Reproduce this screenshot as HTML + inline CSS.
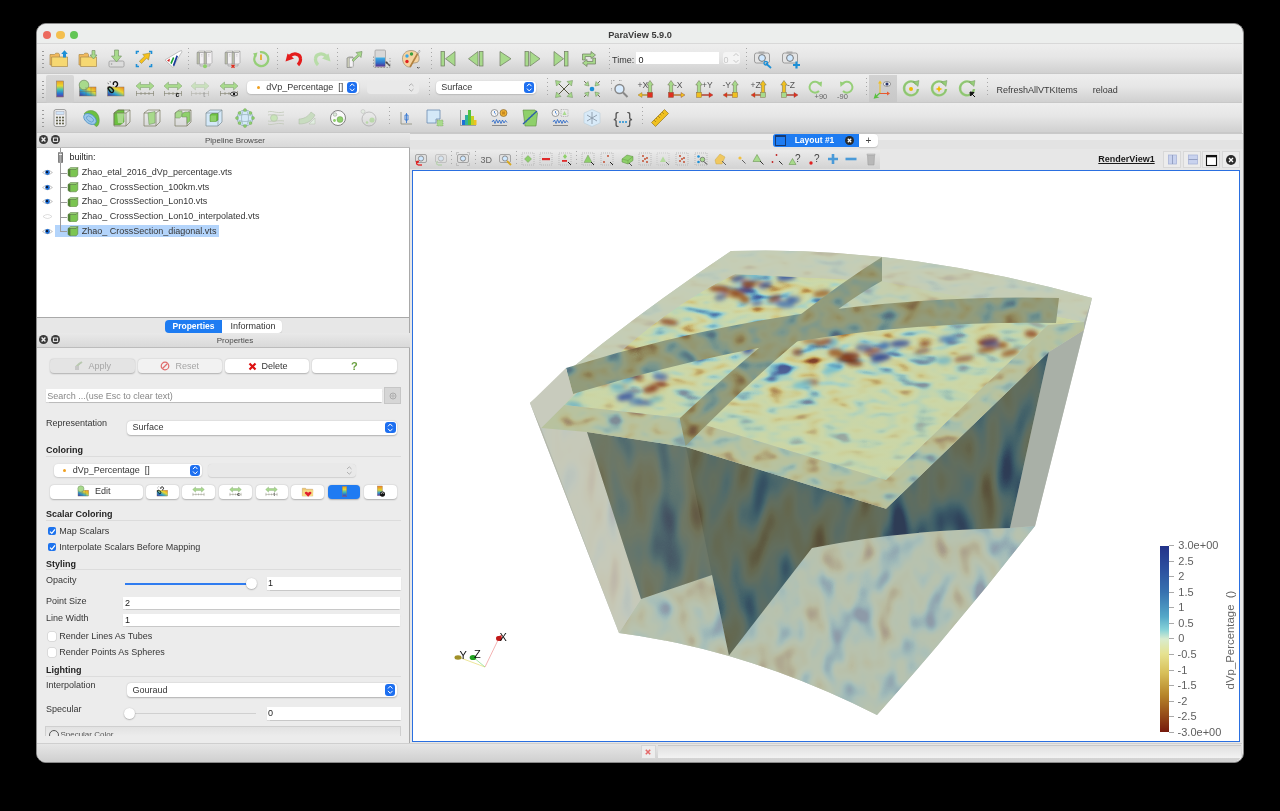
<!DOCTYPE html><html><head><meta charset="utf-8"><style>
html,body{margin:0;padding:0;background:#000;width:1280px;height:811px;overflow:hidden;}
body{font-family:"Liberation Sans", sans-serif;position:relative;-webkit-font-smoothing:antialiased;}
#root{position:absolute;left:0;top:0;width:1280px;height:811px;will-change:transform;}
div,svg{box-sizing:border-box;}
</style></head><body><div id="root">
<div style="position:absolute;left:36px;top:23px;width:1208px;height:740px;background:#ececec;border-radius:10px;border:1px solid #8a8a8a;overflow:hidden;"></div>
<div style="position:absolute;left:37px;top:24px;width:1205px;height:20px;background:#eceeed;border-radius:9px 9px 0 0;"></div>
<div style="position:absolute;left:37px;top:43px;width:1205px;height:1px;background:#d8d8d8;"></div>
<div style="position:absolute;left:42.8px;top:30.8px;width:8.4px;height:8.4px;border-radius:50%;background:#ec6a5e;"></div>
<div style="position:absolute;left:56.3px;top:30.8px;width:8.4px;height:8.4px;border-radius:50%;background:#f4bf4f;"></div>
<div style="position:absolute;left:69.8px;top:30.8px;width:8.4px;height:8.4px;border-radius:50%;background:#61c554;"></div>
<div style="position:absolute;left:440px;top:29.9px;width:400px;text-align:center;font-size:9.2px;line-height:11.2px;color:#3c3c3c;font-weight:bold;white-space:nowrap;">ParaView 5.9.0</div>
<div style="position:absolute;left:37px;top:44px;width:1205px;height:30px;background:linear-gradient(#eeeeee 0%,#e6e6e6 45%,#d0d0d0 100%);border-bottom:1px solid #c8c8c8;"></div>
<div style="position:absolute;left:42px;top:51px;width:2px;height:1px;background:#9a9a9a;"></div>
<div style="position:absolute;left:42px;top:55px;width:2px;height:1px;background:#9a9a9a;"></div>
<div style="position:absolute;left:42px;top:59px;width:2px;height:1px;background:#9a9a9a;"></div>
<div style="position:absolute;left:42px;top:63px;width:2px;height:1px;background:#9a9a9a;"></div>
<div style="position:absolute;left:42px;top:67px;width:2px;height:1px;background:#9a9a9a;"></div>
<div style="position:absolute;left:37px;top:74px;width:1205px;height:29px;background:linear-gradient(#eeeeee 0%,#e6e6e6 45%,#d0d0d0 100%);border-bottom:1px solid #c8c8c8;"></div>
<div style="position:absolute;left:42px;top:81px;width:2px;height:1px;background:#9a9a9a;"></div>
<div style="position:absolute;left:42px;top:85px;width:2px;height:1px;background:#9a9a9a;"></div>
<div style="position:absolute;left:42px;top:89px;width:2px;height:1px;background:#9a9a9a;"></div>
<div style="position:absolute;left:42px;top:93px;width:2px;height:1px;background:#9a9a9a;"></div>
<div style="position:absolute;left:42px;top:97px;width:2px;height:1px;background:#9a9a9a;"></div>
<div style="position:absolute;left:37px;top:103px;width:1205px;height:30px;background:linear-gradient(#eeeeee 0%,#e6e6e6 45%,#d0d0d0 100%);border-bottom:1px solid #c8c8c8;"></div>
<div style="position:absolute;left:42px;top:110px;width:2px;height:1px;background:#9a9a9a;"></div>
<div style="position:absolute;left:42px;top:114px;width:2px;height:1px;background:#9a9a9a;"></div>
<div style="position:absolute;left:42px;top:118px;width:2px;height:1px;background:#9a9a9a;"></div>
<div style="position:absolute;left:42px;top:122px;width:2px;height:1px;background:#9a9a9a;"></div>
<div style="position:absolute;left:42px;top:126px;width:2px;height:1px;background:#9a9a9a;"></div>
<div style="position:absolute;left:37px;top:133px;width:373px;height:15px;background:linear-gradient(#e9e9e9,#d9d9d9);border-bottom:1px solid #bcbcbc;"></div>
<div style="position:absolute;left:38.9px;top:135.20000000000002px;width:9.2px;height:9.2px;border-radius:50%;background:#3a3a3a;"></div>
<div style="position:absolute;left:50.9px;top:135.20000000000002px;width:9.2px;height:9.2px;border-radius:50%;background:#3a3a3a;"></div>
<svg style="position:absolute;left:39px;top:135.2px;" width="9" height="9" viewBox="0 0 9 9"><path d="M2.6 2.6L6.4 6.4M6.4 2.6L2.6 6.4" stroke="#eee" stroke-width="1.4"/></svg>
<svg style="position:absolute;left:51px;top:135.2px;" width="9" height="9" viewBox="0 0 9 9"><rect x="2.4" y="3" width="4.2" height="3.4" fill="none" stroke="#eee" stroke-width="1"/></svg>
<div style="position:absolute;left:35px;top:135.5px;width:400px;text-align:center;font-size:8px;line-height:10px;color:#4a4a4a;font-weight:normal;white-space:nowrap;">Pipeline Browser</div>
<div style="position:absolute;left:37px;top:148px;width:373px;height:170px;background:#fff;border-right:1px solid #a9a9a9;border-bottom:1px solid #a9a9a9;"></div>
<div style="position:absolute;left:55px;top:225px;width:164px;height:12px;background:#b3d4fb;"></div>
<div style="position:absolute;left:60px;top:148px;width:1px;height:84px;background:#9a9a9a;"></div>
<div style="position:absolute;left:57.5px;top:152px;width:5px;height:11px;background:linear-gradient(90deg,#777,#aaa,#666);border-radius:1px;"></div>
<div style="position:absolute;left:58.5px;top:154px;width:3px;height:1px;background:#eee;"></div>
<div style="position:absolute;left:69.5px;top:152.2px;font-size:9px;line-height:11px;color:#222;font-weight:normal;white-space:nowrap;">builtin:</div>
<div style="position:absolute;left:61px;top:172.5px;width:6px;height:1px;background:#9a9a9a;"></div>
<svg style="position:absolute;left:67px;top:167.3px;" width="11.5" height="10.5" viewBox="0 0 11.5 10.5"><path d="M1 2.5L3.5 0.6H10.8L9.2 2.5Z" fill="#9ad07a" stroke="#55703f" stroke-width="0.5"/><path d="M1 2.5H3.2V9.8L1 8.6Z" fill="#4e8a30" stroke="#55703f" stroke-width="0.5"/><path d="M3.2 2.5H9.2L10.8 0.6V8L9.2 9.8H3.2Z" fill="#7cc552" stroke="#55703f" stroke-width="0.5"/></svg>
<svg style="position:absolute;left:42px;top:169.0px;" width="11" height="7" viewBox="0 0 11 7"><path d="M0.6 3.5Q5.5 -1 10.4 3.5Q5.5 8 0.6 3.5Z" fill="#fff" stroke="#9a9a9a" stroke-width="0.6"/><circle cx="5.5" cy="3.5" r="2.4" fill="#1c6fd8"/><circle cx="5" cy="3.1" r="1.1" fill="#0a0a14"/></svg>
<div style="position:absolute;left:81.8px;top:167.0px;font-size:9px;line-height:11px;color:#363636;font-weight:normal;white-space:nowrap;">Zhao_etal_2016_dVp_percentage.vts</div>
<div style="position:absolute;left:61px;top:187.2px;width:6px;height:1px;background:#9a9a9a;"></div>
<svg style="position:absolute;left:67px;top:182.0px;" width="11.5" height="10.5" viewBox="0 0 11.5 10.5"><path d="M1 2.5L3.5 0.6H10.8L9.2 2.5Z" fill="#9ad07a" stroke="#55703f" stroke-width="0.5"/><path d="M1 2.5H3.2V9.8L1 8.6Z" fill="#4e8a30" stroke="#55703f" stroke-width="0.5"/><path d="M3.2 2.5H9.2L10.8 0.6V8L9.2 9.8H3.2Z" fill="#7cc552" stroke="#55703f" stroke-width="0.5"/></svg>
<svg style="position:absolute;left:42px;top:183.7px;" width="11" height="7" viewBox="0 0 11 7"><path d="M0.6 3.5Q5.5 -1 10.4 3.5Q5.5 8 0.6 3.5Z" fill="#fff" stroke="#9a9a9a" stroke-width="0.6"/><circle cx="5.5" cy="3.5" r="2.4" fill="#1c6fd8"/><circle cx="5" cy="3.1" r="1.1" fill="#0a0a14"/></svg>
<div style="position:absolute;left:81.8px;top:181.7px;font-size:9px;line-height:11px;color:#363636;font-weight:normal;white-space:nowrap;">Zhao_ CrossSection_100km.vts</div>
<div style="position:absolute;left:61px;top:201.9px;width:6px;height:1px;background:#9a9a9a;"></div>
<svg style="position:absolute;left:67px;top:196.70000000000002px;" width="11.5" height="10.5" viewBox="0 0 11.5 10.5"><path d="M1 2.5L3.5 0.6H10.8L9.2 2.5Z" fill="#9ad07a" stroke="#55703f" stroke-width="0.5"/><path d="M1 2.5H3.2V9.8L1 8.6Z" fill="#4e8a30" stroke="#55703f" stroke-width="0.5"/><path d="M3.2 2.5H9.2L10.8 0.6V8L9.2 9.8H3.2Z" fill="#7cc552" stroke="#55703f" stroke-width="0.5"/></svg>
<svg style="position:absolute;left:42px;top:198.4px;" width="11" height="7" viewBox="0 0 11 7"><path d="M0.6 3.5Q5.5 -1 10.4 3.5Q5.5 8 0.6 3.5Z" fill="#fff" stroke="#9a9a9a" stroke-width="0.6"/><circle cx="5.5" cy="3.5" r="2.4" fill="#1c6fd8"/><circle cx="5" cy="3.1" r="1.1" fill="#0a0a14"/></svg>
<div style="position:absolute;left:81.8px;top:196.4px;font-size:9px;line-height:11px;color:#363636;font-weight:normal;white-space:nowrap;">Zhao_ CrossSection_Lon10.vts</div>
<div style="position:absolute;left:61px;top:216.7px;width:6px;height:1px;background:#9a9a9a;"></div>
<svg style="position:absolute;left:67px;top:211.5px;" width="11.5" height="10.5" viewBox="0 0 11.5 10.5"><path d="M1 2.5L3.5 0.6H10.8L9.2 2.5Z" fill="#9ad07a" stroke="#55703f" stroke-width="0.5"/><path d="M1 2.5H3.2V9.8L1 8.6Z" fill="#4e8a30" stroke="#55703f" stroke-width="0.5"/><path d="M3.2 2.5H9.2L10.8 0.6V8L9.2 9.8H3.2Z" fill="#7cc552" stroke="#55703f" stroke-width="0.5"/></svg>
<svg style="position:absolute;left:42px;top:213.2px;" width="11" height="7" viewBox="0 0 11 7"><path d="M1 3.5Q5.5 -0.5 10 3.5Q5.5 7.5 1 3.5Z" fill="#fff" stroke="#c8c8c8" stroke-width="0.6"/></svg>
<div style="position:absolute;left:81.8px;top:211.2px;font-size:9px;line-height:11px;color:#363636;font-weight:normal;white-space:nowrap;">Zhao_ CrossSection_Lon10_interpolated.vts</div>
<div style="position:absolute;left:61px;top:231.2px;width:6px;height:1px;background:#9a9a9a;"></div>
<svg style="position:absolute;left:67px;top:226.0px;" width="11.5" height="10.5" viewBox="0 0 11.5 10.5"><path d="M1 2.5L3.5 0.6H10.8L9.2 2.5Z" fill="#9ad07a" stroke="#55703f" stroke-width="0.5"/><path d="M1 2.5H3.2V9.8L1 8.6Z" fill="#4e8a30" stroke="#55703f" stroke-width="0.5"/><path d="M3.2 2.5H9.2L10.8 0.6V8L9.2 9.8H3.2Z" fill="#7cc552" stroke="#55703f" stroke-width="0.5"/></svg>
<svg style="position:absolute;left:42px;top:227.7px;" width="11" height="7" viewBox="0 0 11 7"><path d="M0.6 3.5Q5.5 -1 10.4 3.5Q5.5 8 0.6 3.5Z" fill="#fff" stroke="#9a9a9a" stroke-width="0.6"/><circle cx="5.5" cy="3.5" r="2.4" fill="#1c6fd8"/><circle cx="5" cy="3.1" r="1.1" fill="#0a0a14"/></svg>
<div style="position:absolute;left:81.8px;top:225.7px;font-size:9px;line-height:11px;color:#363636;font-weight:normal;white-space:nowrap;">Zhao_ CrossSection_diagonal.vts</div>
<div style="position:absolute;left:37px;top:318px;width:373px;height:15px;background:#e7e7e7;border-right:1px solid #a9a9a9;"></div>
<div style="position:absolute;left:165px;top:320px;width:57px;height:13px;background:#1e7cf2;border-radius:4px 0 0 4px;"></div>
<div style="position:absolute;left:-6.5px;top:321.35px;width:400px;text-align:center;font-size:8.5px;line-height:10.5px;color:#fff;font-weight:bold;white-space:nowrap;">Properties</div>
<div style="position:absolute;left:222px;top:320px;width:60px;height:13px;background:#fff;border-radius:0 4px 4px 0;box-shadow:0 0.5px 1px rgba(0,0,0,0.15);"></div>
<div style="position:absolute;left:53px;top:321.1px;width:400px;text-align:center;font-size:9px;line-height:11px;color:#333;font-weight:normal;white-space:nowrap;">Information</div>
<div style="position:absolute;left:37px;top:333px;width:373px;height:15px;background:linear-gradient(#e9e9e9,#d9d9d9);border-bottom:1px solid #bcbcbc;"></div>
<div style="position:absolute;left:38.9px;top:335.2px;width:9.2px;height:9.2px;border-radius:50%;background:#3a3a3a;"></div>
<div style="position:absolute;left:50.9px;top:335.2px;width:9.2px;height:9.2px;border-radius:50%;background:#3a3a3a;"></div>
<svg style="position:absolute;left:39px;top:335.2px;" width="9" height="9" viewBox="0 0 9 9"><path d="M2.6 2.6L6.4 6.4M6.4 2.6L2.6 6.4" stroke="#eee" stroke-width="1.4"/></svg>
<svg style="position:absolute;left:51px;top:335.2px;" width="9" height="9" viewBox="0 0 9 9"><rect x="2.4" y="3" width="4.2" height="3.4" fill="none" stroke="#eee" stroke-width="1"/></svg>
<div style="position:absolute;left:35px;top:335.5px;width:400px;text-align:center;font-size:8px;line-height:10px;color:#4a4a4a;font-weight:normal;white-space:nowrap;">Properties</div>
<div style="position:absolute;left:37px;top:348px;width:373px;height:395px;background:#ececec;border-right:1px solid #a9a9a9;"></div>
<div style="position:absolute;left:50px;top:359px;width:85px;height:14px;background:#e4e4e4;border-radius:4px;box-shadow:0 0.5px 1.5px rgba(0,0,0,0.25);"></div>
<div style="position:absolute;left:137.6px;top:359px;width:84.70000000000002px;height:14px;background:#f2f2f2;border-radius:4px;box-shadow:0 0.5px 1.5px rgba(0,0,0,0.25);"></div>
<div style="position:absolute;left:225.4px;top:359px;width:83.9px;height:14px;background:#fff;border-radius:4px;box-shadow:0 0.5px 1.5px rgba(0,0,0,0.25);"></div>
<div style="position:absolute;left:311.8px;top:359px;width:85.0px;height:14px;background:#fff;border-radius:4px;box-shadow:0 0.5px 1.5px rgba(0,0,0,0.25);"></div>
<div style="position:absolute;left:88.5px;top:360.5px;font-size:9px;line-height:11px;color:#a6a6a6;font-weight:normal;white-space:nowrap;">Apply</div>
<div style="position:absolute;left:175.5px;top:360.5px;font-size:9px;line-height:11px;color:#a6a6a6;font-weight:normal;white-space:nowrap;">Reset</div>
<div style="position:absolute;left:261.5px;top:360.5px;font-size:9px;line-height:11px;color:#363636;font-weight:normal;white-space:nowrap;">Delete</div>
<svg style="position:absolute;left:74px;top:361px;" width="10" height="10" viewBox="0 0 10 10"><path d="M2 6L5 3L8 1" stroke="#b9c9b0" stroke-width="2"/><rect x="1" y="5" width="4" height="4" fill="#c7c7c7"/></svg>
<svg style="position:absolute;left:160px;top:361px;" width="10" height="10" viewBox="0 0 10 10"><circle cx="5" cy="5" r="3.8" fill="none" stroke="#e06a6a" stroke-width="1.2"/><path d="M2.5 7.5L7.5 2.5" stroke="#e06a6a" stroke-width="1.2"/></svg>
<svg style="position:absolute;left:248px;top:361.5px;" width="9" height="9" viewBox="0 0 9 9"><path d="M1.5 1.5L7.5 7.5M7.5 1.5L1.5 7.5" stroke="#d11" stroke-width="2.2"/></svg>
<div style="position:absolute;left:154.3px;top:359.5px;width:400px;text-align:center;font-size:11px;line-height:13px;color:#6aa040;font-weight:bold;white-space:nowrap;">?</div>
<div style="position:absolute;left:46px;top:389px;width:336px;height:13px;background:#fff;box-shadow:0 0.5px 1px rgba(0,0,0,0.2);"></div>
<div style="position:absolute;left:47.2px;top:390.5px;font-size:9px;line-height:11px;color:#888;font-weight:normal;white-space:nowrap;">Search ...(use Esc to clear text)</div>
<div style="position:absolute;left:384.3px;top:387.3px;width:17px;height:17px;background:#d6d6d6;border:1px solid #c6c6c6;"></div>
<svg style="position:absolute;left:387.8px;top:390.8px;" width="10" height="10" viewBox="0 0 10 10"><circle cx="5" cy="5" r="3" fill="none" stroke="#aaa" stroke-width="1"/><circle cx="5" cy="5" r="1.2" fill="none" stroke="#aaa" stroke-width="0.8"/></svg>
<div style="position:absolute;left:46px;top:418px;font-size:9px;line-height:11px;color:#363636;font-weight:normal;white-space:nowrap;">Representation</div>
<div style="position:absolute;left:126.6px;top:420.6px;width:270.4px;height:14.099999999999966px;background:#fff;border-radius:4px;box-shadow:0 0.5px 1.5px rgba(0,0,0,0.25);"></div>
<div style="position:absolute;left:132.6px;top:422.15px;font-size:9px;line-height:11px;color:#363636;font-weight:normal;white-space:nowrap;">Surface</div>
<div style="position:absolute;left:385px;top:422.1px;width:10.5px;height:11.099999999999966px;background:#1d6ff0;border-radius:3px;"></div>
<svg style="position:absolute;left:385px;top:422.1px;" width="11" height="11.099999999999966" viewBox="0 0 11 11.099999999999966"><path d="M3 4.349999999999983L5.25 1.9499999999999829L7.5 4.349999999999983M3 6.749999999999983L5.25 9.149999999999983L7.5 6.749999999999983" fill="none" stroke="#fff" stroke-width="1"/></svg>
<div style="position:absolute;left:46px;top:445px;font-size:9px;line-height:11px;color:#1f1f1f;font-weight:bold;white-space:nowrap;">Coloring</div>
<div style="position:absolute;left:46px;top:455.5px;width:355px;height:1px;background:#dcdcdc;"></div>
<div style="position:absolute;left:53.5px;top:463.6px;width:148.1px;height:13.599999999999966px;background:#fff;border-radius:4px;box-shadow:0 0.5px 1.5px rgba(0,0,0,0.25);"></div>
<div style="position:absolute;left:72.7px;top:464.9px;font-size:9px;line-height:11px;color:#363636;font-weight:normal;white-space:nowrap;">dVp_Percentage&nbsp;&nbsp;[]</div>
<div style="position:absolute;left:63.300000000000004px;top:468.79999999999995px;width:3.2px;height:3.2px;border-radius:50%;background:#f0a020;"></div>
<div style="position:absolute;left:189.6px;top:465.1px;width:10.5px;height:10.599999999999966px;background:#1d6ff0;border-radius:3px;"></div>
<svg style="position:absolute;left:189.6px;top:465.1px;" width="11" height="10.599999999999966" viewBox="0 0 11 10.599999999999966"><path d="M3 4.099999999999983L5.25 1.6999999999999829L7.5 4.099999999999983M3 6.499999999999983L5.25 8.899999999999983L7.5 6.499999999999983" fill="none" stroke="#fff" stroke-width="1"/></svg>
<div style="position:absolute;left:208.2px;top:463.6px;width:148px;height:13.6px;background:#e9e9e9;border-radius:4px;box-shadow:0 0.5px 1px rgba(0,0,0,0.12);"></div>
<svg style="position:absolute;left:344px;top:465px;" width="11" height="11" viewBox="0 0 11 11"><path d="M3 4L5.25 1.8L7.5 4M3 7L5.25 9.2L7.5 7" fill="none" stroke="#aaa" stroke-width="0.9"/></svg>
<div style="position:absolute;left:49.8px;top:484.7px;width:92.89999999999999px;height:14.0px;background:#fff;border-radius:4px;box-shadow:0 0.5px 1.5px rgba(0,0,0,0.25);"></div>
<div style="position:absolute;left:146.4px;top:484.7px;width:32.29999999999998px;height:14.0px;background:#fff;border-radius:4px;box-shadow:0 0.5px 1.5px rgba(0,0,0,0.25);"></div>
<div style="position:absolute;left:182.3px;top:484.7px;width:32.69999999999999px;height:14.0px;background:#fff;border-radius:4px;box-shadow:0 0.5px 1.5px rgba(0,0,0,0.25);"></div>
<div style="position:absolute;left:219px;top:484.7px;width:32.5px;height:14.0px;background:#fff;border-radius:4px;box-shadow:0 0.5px 1.5px rgba(0,0,0,0.25);"></div>
<div style="position:absolute;left:255.5px;top:484.7px;width:32.5px;height:14.0px;background:#fff;border-radius:4px;box-shadow:0 0.5px 1.5px rgba(0,0,0,0.25);"></div>
<div style="position:absolute;left:291.4px;top:484.7px;width:32.60000000000002px;height:14.0px;background:#fff;border-radius:4px;box-shadow:0 0.5px 1.5px rgba(0,0,0,0.25);"></div>
<div style="position:absolute;left:328px;top:484.7px;width:32px;height:14.0px;background:#1f7bf2;border-radius:4px;box-shadow:0 0.5px 1.5px rgba(0,0,0,0.25);"></div>
<div style="position:absolute;left:364.2px;top:484.7px;width:33.0px;height:14.0px;background:#fff;border-radius:4px;box-shadow:0 0.5px 1.5px rgba(0,0,0,0.25);"></div>
<div style="position:absolute;left:95px;top:486.3px;font-size:9px;line-height:11px;color:#363636;font-weight:normal;white-space:nowrap;">Edit</div>
<div style="position:absolute;left:46px;top:508.5px;font-size:9px;line-height:11px;color:#1f1f1f;font-weight:bold;white-space:nowrap;">Scalar Coloring</div>
<div style="position:absolute;left:46px;top:519.5px;width:355px;height:1px;background:#dcdcdc;"></div>
<div style="position:absolute;left:47.8px;top:526.7px;width:8.6px;height:8.6px;background:#1d73ee;border-radius:2px;"></div>
<svg style="position:absolute;left:47.8px;top:526.7px;" width="9" height="9" viewBox="0 0 9 9"><path d="M2 4.6L3.8 6.4L7 2.4" fill="none" stroke="#fff" stroke-width="1.3"/></svg>
<div style="position:absolute;left:59.3px;top:525.5px;font-size:9px;line-height:11px;color:#363636;font-weight:normal;white-space:nowrap;">Map Scalars</div>
<div style="position:absolute;left:47.8px;top:542.7px;width:8.6px;height:8.6px;background:#1d73ee;border-radius:2px;"></div>
<svg style="position:absolute;left:47.8px;top:542.7px;" width="9" height="9" viewBox="0 0 9 9"><path d="M2 4.6L3.8 6.4L7 2.4" fill="none" stroke="#fff" stroke-width="1.3"/></svg>
<div style="position:absolute;left:59.3px;top:541.5px;font-size:9px;line-height:11px;color:#363636;font-weight:normal;white-space:nowrap;">Interpolate Scalars Before Mapping</div>
<div style="position:absolute;left:46px;top:559px;font-size:9px;line-height:11px;color:#1f1f1f;font-weight:bold;white-space:nowrap;">Styling</div>
<div style="position:absolute;left:46px;top:569px;width:355px;height:1px;background:#dcdcdc;"></div>
<div style="position:absolute;left:46px;top:574.5px;font-size:9px;line-height:11px;color:#363636;font-weight:normal;white-space:nowrap;">Opacity</div>
<div style="position:absolute;left:125px;top:583px;width:127px;height:1.6px;background:#2f7cf0;"></div>
<div style="position:absolute;left:245.5px;top:577.8px;width:11px;height:11px;border-radius:50%;background:#fff;box-shadow:0 0.5px 1.5px rgba(0,0,0,0.4);"></div>
<div style="position:absolute;left:266.7px;top:577px;width:134px;height:13.3px;background:#fff;box-shadow:0 0.5px 1px rgba(0,0,0,0.15);"></div>
<div style="position:absolute;left:268px;top:578.3px;font-size:9px;line-height:11px;color:#222;font-weight:normal;white-space:nowrap;">1</div>
<div style="position:absolute;left:46px;top:595.5px;font-size:9px;line-height:11px;color:#363636;font-weight:normal;white-space:nowrap;">Point Size</div>
<div style="position:absolute;left:123.4px;top:597px;width:277px;height:12.4px;background:#fff;box-shadow:0 0.5px 1px rgba(0,0,0,0.15);"></div>
<div style="position:absolute;left:125px;top:597.8px;font-size:9px;line-height:11px;color:#222;font-weight:normal;white-space:nowrap;">2</div>
<div style="position:absolute;left:46px;top:612.5px;font-size:9px;line-height:11px;color:#363636;font-weight:normal;white-space:nowrap;">Line Width</div>
<div style="position:absolute;left:123.4px;top:614px;width:277px;height:12.4px;background:#fff;box-shadow:0 0.5px 1px rgba(0,0,0,0.15);"></div>
<div style="position:absolute;left:125px;top:614.8px;font-size:9px;line-height:11px;color:#222;font-weight:normal;white-space:nowrap;">1</div>
<div style="position:absolute;left:47.8px;top:632.2px;width:8.6px;height:8.6px;background:#fff;border-radius:2px;box-shadow:0 0 0 0.5px #c8c8c8;"></div>
<div style="position:absolute;left:59.3px;top:631px;font-size:9px;line-height:11px;color:#363636;font-weight:normal;white-space:nowrap;">Render Lines As Tubes</div>
<div style="position:absolute;left:47.8px;top:648.2px;width:8.6px;height:8.6px;background:#fff;border-radius:2px;box-shadow:0 0 0 0.5px #c8c8c8;"></div>
<div style="position:absolute;left:59.3px;top:647px;font-size:9px;line-height:11px;color:#363636;font-weight:normal;white-space:nowrap;">Render Points As Spheres</div>
<div style="position:absolute;left:46px;top:664.5px;font-size:9px;line-height:11px;color:#1f1f1f;font-weight:bold;white-space:nowrap;">Lighting</div>
<div style="position:absolute;left:46px;top:675.5px;width:355px;height:1px;background:#dcdcdc;"></div>
<div style="position:absolute;left:46px;top:680px;font-size:9px;line-height:11px;color:#363636;font-weight:normal;white-space:nowrap;">Interpolation</div>
<div style="position:absolute;left:126.5px;top:682.8px;width:270.3px;height:14.400000000000091px;background:#fff;border-radius:4px;box-shadow:0 0.5px 1.5px rgba(0,0,0,0.25);"></div>
<div style="position:absolute;left:132.5px;top:684.5px;font-size:9px;line-height:11px;color:#363636;font-weight:normal;white-space:nowrap;">Gouraud</div>
<div style="position:absolute;left:384.8px;top:684.3px;width:10.5px;height:11.400000000000091px;background:#1d6ff0;border-radius:3px;"></div>
<svg style="position:absolute;left:384.8px;top:684.3px;" width="11" height="11.400000000000091" viewBox="0 0 11 11.400000000000091"><path d="M3 4.500000000000045L5.25 2.1000000000000454L7.5 4.500000000000045M3 6.900000000000046L5.25 9.300000000000045L7.5 6.900000000000046" fill="none" stroke="#fff" stroke-width="1"/></svg>
<div style="position:absolute;left:46px;top:704px;font-size:9px;line-height:11px;color:#363636;font-weight:normal;white-space:nowrap;">Specular</div>
<div style="position:absolute;left:125px;top:713px;width:131px;height:1.2px;background:#d0d0d0;"></div>
<div style="position:absolute;left:124px;top:708px;width:11px;height:11px;border-radius:50%;background:#fff;box-shadow:0 0.5px 1.5px rgba(0,0,0,0.4);"></div>
<div style="position:absolute;left:266.7px;top:706.5px;width:134px;height:13.3px;background:#fff;box-shadow:0 0.5px 1px rgba(0,0,0,0.15);"></div>
<div style="position:absolute;left:268px;top:707.8px;font-size:9px;line-height:11px;color:#222;font-weight:normal;white-space:nowrap;">0</div>
<div style="position:absolute;left:45.4px;top:726px;width:356px;height:10px;background:linear-gradient(#e2e2e2,#ececec);border:1px solid #cfcfcf;border-bottom:none;overflow:hidden;"></div>
<div style="position:absolute;left:45.4px;top:726px;width:356px;height:9.5px;overflow:hidden;"><div style="position:absolute;left:15px;top:4px;font-size:8px;line-height:10px;color:#555;white-space:nowrap;">Specular Color</div><div style="position:absolute;left:4px;top:3.5px;width:10px;height:10px;border-radius:50%;border:1px solid #555;box-sizing:border-box;"></div></div>
<div style="position:absolute;left:410px;top:133px;width:833px;height:16px;background:linear-gradient(#ececec 0,#ececec 6px,#e3e3e3 6px,#e3e3e3 100%);border-top:1px solid #c9c9c9;"></div>
<div style="position:absolute;left:773px;top:134px;width:85.5px;height:12.8px;background:#1e7cf2;border-radius:3px 0 0 3px;"></div>
<div style="position:absolute;left:775px;top:135px;width:11px;height:10.5px;background:#1e7cf2;border:1px solid #163a73;border-top:2px solid #163a73;"></div>
<div style="position:absolute;left:614.5px;top:135.35px;width:400px;text-align:center;font-size:8.5px;line-height:10.5px;color:#fff;font-weight:bold;white-space:nowrap;">Layout #1</div>
<div style="position:absolute;left:844.5px;top:135.8px;width:9px;height:9px;border-radius:50%;background:#2b2b2b;"></div>
<svg style="position:absolute;left:844.5px;top:135.8px;" width="9" height="9" viewBox="0 0 9 9"><path d="M2.8 2.8L6.2 6.2M6.2 2.8L2.8 6.2" stroke="#fff" stroke-width="1.3"/></svg>
<div style="position:absolute;left:858.5px;top:134px;width:19.5px;height:12.8px;background:#fff;border-radius:0 4px 4px 0;box-shadow:0 0.5px 1px rgba(0,0,0,0.15);"></div>
<div style="position:absolute;left:668.3px;top:134.5px;width:400px;text-align:center;font-size:10px;line-height:12px;color:#444;font-weight:normal;white-space:nowrap;">+</div>
<div style="position:absolute;left:410px;top:149px;width:833px;height:21px;background:#e7e7e7;"></div>
<div style="position:absolute;left:410px;top:150px;width:470px;height:19px;background:linear-gradient(#ebebeb,#d3d3d3);"></div>
<div style="position:absolute;left:1098.3px;top:154.3px;font-size:9px;line-height:11px;color:#1a1a1a;font-weight:bold;white-space:nowrap;"><u>RenderView1</u></div>
<div style="position:absolute;left:1163.4px;top:150.8px;width:17.799999999999955px;height:17.7px;background:#ececec;border:1px solid #d8d8d8;"></div>
<div style="position:absolute;left:1183px;top:150.8px;width:17.5px;height:17.7px;background:#ececec;border:1px solid #d8d8d8;"></div>
<div style="position:absolute;left:1202px;top:150.8px;width:18px;height:17.7px;background:#ececec;border:1px solid #d8d8d8;"></div>
<div style="position:absolute;left:1222px;top:150.8px;width:17.59999999999991px;height:17.7px;background:#ececec;border:1px solid #d8d8d8;"></div>
<svg style="position:absolute;left:1165px;top:153px;" width="15" height="13" viewBox="0 0 15 13"><rect x="3.5" y="2" width="8" height="9" fill="#c8d2ee" stroke="#a8b4d8" stroke-width="0.8"/><path d="M7.5 2V11" stroke="#8894b8" stroke-width="0.8"/></svg>
<svg style="position:absolute;left:1184.5px;top:153px;" width="15" height="13" viewBox="0 0 15 13"><rect x="3.5" y="2" width="9" height="9" fill="#c8d2ee" stroke="#a8b4d8" stroke-width="0.8"/><path d="M3.5 6.5H12.5" stroke="#8894b8" stroke-width="0.8"/></svg>
<svg style="position:absolute;left:1203.5px;top:152.5px;" width="15" height="15" viewBox="0 0 15 15"><rect x="2.5" y="2.5" width="10" height="10" fill="#fff" stroke="#111" stroke-width="1.1"/><rect x="2.5" y="2.5" width="10" height="1.8" fill="#111"/></svg>
<div style="position:absolute;left:1226px;top:154.5px;width:10px;height:10px;border-radius:50%;background:#2b2b2b;"></div>
<svg style="position:absolute;left:1226px;top:154.5px;" width="10" height="10" viewBox="0 0 10 10"><path d="M3 3L7 7M7 3L3 7" stroke="#fff" stroke-width="1.4"/></svg>
<div style="position:absolute;left:410px;top:169px;width:833px;height:574px;background:#e7e7e7;"></div>
<div style="position:absolute;left:412px;top:170px;width:828px;height:571.5px;background:#fff;border:1.6px solid #2a6fe0;"></div>
<div style="position:absolute;left:37px;top:743px;width:1205px;height:19px;background:linear-gradient(#e6e6e6,#cfcfcf);border-top:1px solid #cfcfcf;border-radius:0 0 9px 9px;"></div>
<div style="position:absolute;left:640.6px;top:745px;width:15px;height:14px;background:#ededed;border:1px solid #d6d6d6;"></div>
<svg style="position:absolute;left:643px;top:747px;" width="10" height="10" viewBox="0 0 10 10"><path d="M2.8 2.8L7.2 7.2M7.2 2.8L2.8 7.2" stroke="#e46a6a" stroke-width="1.6"/></svg>
<div style="position:absolute;left:657.8px;top:745px;width:583px;height:13px;background:linear-gradient(#e0e0e0,#f2f2f2);border-top:1px solid #c9c9c9;"></div>
<svg style="position:absolute;left:0px;top:0px;clip-path:inset(171.6px 41.6px 71.1px 413.6px);" width="1280" height="811" viewBox="0 0 1280 811"><defs><filter id="tTop" filterUnits="userSpaceOnUse" x="500" y="240" width="620" height="490" color-interpolation-filters="sRGB"><feTurbulence type="fractalNoise" baseFrequency="0.034 0.085" numOctaves="2" seed="3" result="n"/><feColorMatrix in="n" type="matrix" values="1 0 0 0 0  1 0 0 0 0  1 0 0 0 0  0 0 0 0 1" result="g"/><feComponentTransfer in="g"><feFuncR type="table" tableValues="0.460 0.460 0.460 0.460 0.460 0.460 0.537 0.608 0.665 0.717 0.758 0.792 0.823 0.823 0.818 0.814 0.810 0.808 0.806 0.805 0.793 0.772 0.742 0.704 0.659 0.606 0.537 0.460 0.380 0.326 0.267 0.229 0.199 0.193 0.193 0.193 0.193 0.193 0.193 0.193 0.193"/><feFuncG type="table" tableValues="0.166 0.166 0.166 0.166 0.166 0.166 0.263 0.354 0.451 0.541 0.622 0.696 0.762 0.790 0.808 0.824 0.836 0.845 0.851 0.852 0.849 0.846 0.840 0.834 0.825 0.816 0.773 0.724 0.666 0.578 0.483 0.387 0.288 0.267 0.267 0.267 0.267 0.267 0.267 0.267 0.267"/><feFuncB type="table" tableValues="0.088 0.088 0.088 0.088 0.088 0.088 0.127 0.165 0.218 0.267 0.335 0.409 0.475 0.525 0.567 0.602 0.630 0.651 0.663 0.667 0.675 0.691 0.714 0.742 0.776 0.816 0.812 0.805 0.794 0.755 0.714 0.655 0.586 0.572 0.572 0.572 0.572 0.572 0.572 0.572 0.572"/><feFuncA type="linear" slope="0" intercept="1"/></feComponentTransfer></filter><filter id="tShellTop" filterUnits="userSpaceOnUse" x="500" y="240" width="620" height="490" color-interpolation-filters="sRGB"><feTurbulence type="fractalNoise" baseFrequency="0.034 0.085" numOctaves="2" seed="3" result="n"/><feColorMatrix in="n" type="matrix" values="1 0 0 0 0  1 0 0 0 0  1 0 0 0 0  0 0 0 0 1" result="g"/><feComponentTransfer in="g"><feFuncR type="table" tableValues="0.728 0.728 0.728 0.728 0.728 0.728 0.728 0.728 0.728 0.740 0.750 0.759 0.766 0.771 0.776 0.775 0.775 0.774 0.774 0.773 0.773 0.772 0.770 0.766 0.761 0.754 0.746 0.735 0.723 0.713 0.704 0.698 0.693 0.693 0.693 0.693 0.693 0.693 0.693 0.693 0.693"/><feFuncG type="table" tableValues="0.717 0.717 0.717 0.717 0.717 0.717 0.717 0.717 0.717 0.732 0.747 0.761 0.774 0.785 0.795 0.799 0.802 0.804 0.805 0.806 0.807 0.806 0.806 0.805 0.804 0.803 0.801 0.794 0.787 0.775 0.761 0.746 0.730 0.730 0.730 0.730 0.730 0.730 0.730 0.730 0.730"/><feFuncB type="table" tableValues="0.639 0.639 0.639 0.639 0.639 0.639 0.639 0.639 0.639 0.645 0.651 0.659 0.668 0.680 0.690 0.697 0.703 0.708 0.711 0.713 0.714 0.715 0.717 0.719 0.723 0.728 0.734 0.733 0.732 0.728 0.721 0.713 0.702 0.702 0.702 0.702 0.702 0.702 0.702 0.702 0.702"/><feFuncA type="linear" slope="0" intercept="1"/></feComponentTransfer></filter><filter id="tBand" filterUnits="userSpaceOnUse" x="500" y="240" width="620" height="490" color-interpolation-filters="sRGB"><feTurbulence type="fractalNoise" baseFrequency="0.04 0.06" numOctaves="2" seed="11" result="n"/><feColorMatrix in="n" type="matrix" values="1 0 0 0 0  1 0 0 0 0  1 0 0 0 0  0 0 0 0 1" result="g"/><feComponentTransfer in="g"><feFuncR type="table" tableValues="0.595 0.595 0.595 0.595 0.595 0.595 0.595 0.612 0.640 0.663 0.683 0.700 0.714 0.726 0.731 0.729 0.727 0.726 0.725 0.724 0.724 0.721 0.714 0.705 0.692 0.676 0.657 0.634 0.607 0.576 0.553 0.532 0.514 0.503 0.496 0.496 0.496 0.496 0.496 0.496 0.496"/><feFuncG type="table" tableValues="0.509 0.509 0.509 0.509 0.509 0.509 0.509 0.531 0.566 0.601 0.635 0.667 0.696 0.721 0.738 0.745 0.752 0.757 0.760 0.763 0.764 0.764 0.762 0.761 0.758 0.756 0.752 0.742 0.724 0.705 0.676 0.641 0.605 0.569 0.547 0.547 0.547 0.547 0.547 0.547 0.547"/><feFuncB type="table" tableValues="0.409 0.409 0.409 0.409 0.409 0.409 0.409 0.418 0.432 0.450 0.469 0.490 0.518 0.544 0.565 0.581 0.596 0.607 0.616 0.622 0.624 0.626 0.631 0.638 0.648 0.660 0.674 0.679 0.677 0.674 0.663 0.648 0.630 0.605 0.589 0.589 0.589 0.589 0.589 0.589 0.589"/><feFuncA type="linear" slope="0" intercept="1"/></feComponentTransfer></filter><filter id="tWall" filterUnits="userSpaceOnUse" x="500" y="240" width="620" height="490" color-interpolation-filters="sRGB"><feTurbulence type="fractalNoise" baseFrequency="0.04 0.05" numOctaves="2" seed="5" result="n"/><feColorMatrix in="n" type="matrix" values="1 0 0 0 0  1 0 0 0 0  1 0 0 0 0  0 0 0 0 1" result="g"/><feComponentTransfer in="g"><feFuncR type="table" tableValues="0.423 0.423 0.423 0.423 0.423 0.428 0.453 0.478 0.499 0.518 0.536 0.552 0.564 0.576 0.585 0.583 0.581 0.579 0.578 0.576 0.576 0.570 0.559 0.546 0.529 0.511 0.491 0.466 0.438 0.408 0.383 0.364 0.344 0.327 0.317 0.307 0.305 0.305 0.305 0.305 0.305"/><feFuncG type="table" tableValues="0.309 0.309 0.309 0.309 0.309 0.316 0.348 0.379 0.411 0.444 0.475 0.505 0.532 0.558 0.579 0.587 0.594 0.601 0.606 0.610 0.613 0.612 0.610 0.607 0.604 0.601 0.597 0.583 0.566 0.547 0.523 0.492 0.459 0.426 0.394 0.361 0.354 0.354 0.354 0.354 0.354"/><feFuncB type="table" tableValues="0.232 0.232 0.232 0.232 0.232 0.234 0.247 0.259 0.276 0.294 0.311 0.334 0.362 0.388 0.411 0.429 0.446 0.460 0.472 0.482 0.487 0.491 0.499 0.510 0.522 0.536 0.551 0.552 0.550 0.547 0.540 0.527 0.513 0.496 0.473 0.450 0.445 0.445 0.445 0.445 0.445"/><feFuncA type="linear" slope="0" intercept="1"/></feComponentTransfer></filter><filter id="tDark" filterUnits="userSpaceOnUse" x="500" y="240" width="620" height="490" color-interpolation-filters="sRGB"><feTurbulence type="fractalNoise" baseFrequency="0.035 0.014" numOctaves="2" seed="8" result="n"/><feColorMatrix in="n" type="matrix" values="1 0 0 0 0  1 0 0 0 0  1 0 0 0 0  0 0 0 0 1" result="g"/><feComponentTransfer in="g"><feFuncR type="table" tableValues="0.271 0.271 0.271 0.271 0.278 0.296 0.313 0.328 0.342 0.356 0.367 0.377 0.386 0.394 0.392 0.390 0.389 0.388 0.387 0.379 0.367 0.353 0.338 0.321 0.301 0.280 0.257 0.239 0.225 0.211 0.199 0.192 0.184 0.182 0.182 0.182 0.182 0.182 0.182 0.182 0.182"/><feFuncG type="table" tableValues="0.203 0.203 0.203 0.203 0.212 0.234 0.256 0.279 0.303 0.326 0.348 0.369 0.389 0.407 0.413 0.419 0.425 0.429 0.432 0.431 0.429 0.426 0.424 0.421 0.409 0.395 0.381 0.362 0.339 0.316 0.292 0.269 0.246 0.237 0.237 0.237 0.237 0.237 0.237 0.237 0.237"/><feFuncB type="table" tableValues="0.175 0.175 0.175 0.175 0.179 0.188 0.197 0.208 0.221 0.234 0.250 0.271 0.291 0.310 0.325 0.338 0.351 0.361 0.369 0.375 0.384 0.394 0.405 0.418 0.418 0.416 0.414 0.408 0.398 0.388 0.375 0.360 0.344 0.337 0.337 0.337 0.337 0.337 0.337 0.337 0.337"/><feFuncA type="linear" slope="0" intercept="1"/></feComponentTransfer></filter><filter id="tLeft" filterUnits="userSpaceOnUse" x="500" y="240" width="620" height="490" color-interpolation-filters="sRGB"><feTurbulence type="fractalNoise" baseFrequency="0.05 0.015" numOctaves="2" seed="13" result="n"/><feColorMatrix in="n" type="matrix" values="1 0 0 0 0  1 0 0 0 0  1 0 0 0 0  0 0 0 0 1" result="g"/><feComponentTransfer in="g"><feFuncR type="table" tableValues="0.741 0.741 0.741 0.741 0.741 0.741 0.741 0.741 0.747 0.754 0.760 0.766 0.771 0.774 0.778 0.780 0.780 0.779 0.779 0.778 0.778 0.776 0.773 0.769 0.764 0.758 0.751 0.743 0.734 0.728 0.723 0.718 0.715 0.713 0.713 0.713 0.713 0.713 0.713 0.713 0.713"/><feFuncG type="table" tableValues="0.717 0.717 0.717 0.717 0.717 0.717 0.717 0.717 0.724 0.733 0.742 0.751 0.760 0.768 0.776 0.782 0.784 0.786 0.788 0.789 0.790 0.789 0.789 0.788 0.787 0.786 0.782 0.777 0.772 0.763 0.754 0.744 0.735 0.727 0.727 0.727 0.727 0.727 0.727 0.727 0.727"/><feFuncB type="table" tableValues="0.667 0.667 0.667 0.667 0.667 0.667 0.667 0.667 0.670 0.673 0.678 0.683 0.688 0.696 0.703 0.710 0.715 0.720 0.724 0.726 0.728 0.729 0.732 0.735 0.739 0.743 0.744 0.743 0.742 0.739 0.735 0.730 0.723 0.718 0.718 0.718 0.718 0.718 0.718 0.718 0.718"/><feFuncA type="linear" slope="0" intercept="1"/></feComponentTransfer></filter><filter id="tBot" filterUnits="userSpaceOnUse" x="500" y="240" width="620" height="490" color-interpolation-filters="sRGB"><feTurbulence type="fractalNoise" baseFrequency="0.04 0.028" numOctaves="2" seed="21" result="n"/><feColorMatrix in="n" type="matrix" values="1 0 0 0 0  1 0 0 0 0  1 0 0 0 0  0 0 0 0 1" result="g"/><feComponentTransfer in="g"><feFuncR type="table" tableValues="0.629 0.629 0.629 0.629 0.629 0.629 0.636 0.655 0.671 0.685 0.698 0.709 0.718 0.726 0.726 0.725 0.724 0.723 0.722 0.720 0.713 0.703 0.691 0.677 0.661 0.641 0.620 0.602 0.588 0.574 0.566 0.559 0.557 0.557 0.557 0.557 0.557 0.557 0.557 0.557 0.557"/><feFuncG type="table" tableValues="0.578 0.578 0.578 0.578 0.578 0.578 0.588 0.611 0.633 0.657 0.680 0.701 0.720 0.738 0.746 0.751 0.756 0.760 0.762 0.762 0.761 0.759 0.757 0.755 0.748 0.736 0.723 0.704 0.682 0.657 0.634 0.611 0.606 0.606 0.606 0.606 0.606 0.606 0.606 0.606 0.606"/><feFuncB type="table" tableValues="0.530 0.530 0.530 0.530 0.530 0.530 0.534 0.543 0.553 0.566 0.578 0.596 0.616 0.633 0.648 0.660 0.670 0.678 0.684 0.687 0.692 0.699 0.708 0.719 0.725 0.724 0.722 0.716 0.706 0.695 0.680 0.663 0.660 0.660 0.660 0.660 0.660 0.660 0.660 0.660 0.660"/><feFuncA type="linear" slope="0" intercept="1"/></feComponentTransfer></filter><clipPath id="cTop"><path d="M564,405 L628,345 Q680,300 735,274 L881,281 Q980,300 1084,322 L1048,325 L886,480 L682,418 Z"/></clipPath><clipPath id="cBand"><path d="M541,428 L564,405 L682,418 L886,480 L1048,325 L1084,322 L1084,330 L1048.8,352 L886,508.7 L686,447 L587,432 Z"/></clipPath><clipPath id="cDiag"><path d="M566,368 Q810,292 1059,298 L1056,323 Q820,318 573,394 Z"/></clipPath><clipPath id="cLon"><path d="M882,257 Q790,315 679.7,418.3 L685.6,446 Q810,320 882,281 Z"/></clipPath><clipPath id="cDark"><path d="M587,432 L686,447 L886,508.7 L1048.8,352 L1010,528 Q900,530 812,548 L728.9,655.5 L712,575 L641,599 Z"/></clipPath><clipPath id="cBot"><path d="M619,633 L641,599 L712,575 L729,655 L812,548 Q900,530 1010,528 L1035,526 Q960,622 877,715 Q748,649.6 619,633 Z"/></clipPath><clipPath id="cShellTop"><path d="M530,403 Q620,325 731,251 Q900,245 1092,298 L1084,322 Q980,300 881,281 L735,274 Q680,300 628,345 L564,405 Z"/></clipPath><clipPath id="cLeft"><path d="M541,428 L587,432 L641,599 L619,633 Z"/></clipPath></defs><path d="M530,403 Q620,325 731,251 Q900,245 1092,298 L1035,526 Q960,622 877,715 Q748,649.6 619,633 Z" fill="#c3c9bb"/><g clip-path="url(#cBot)"><rect x="500" y="240" width="620" height="490" filter="url(#tBot)"/></g><g clip-path="url(#cLeft)"><rect x="500" y="240" width="620" height="490" filter="url(#tLeft)"/></g><path d="M530,403 L541,428 L619,633 Z" fill="#b3b7ab"/><path d="M1092,298 L1084,322 L1084,330 L1048.8,352 L1010,528 L1035,526 Z" fill="#a9b0a7"/><g clip-path="url(#cDark)"><rect x="500" y="240" width="620" height="490" filter="url(#tDark)"/></g><path d="M587,432 L686,447 L712,575 L641,599 Z" fill="#a8a888" opacity="0.18"/><g clip-path="url(#cTop)"><rect x="500" y="240" width="620" height="490" filter="url(#tTop)"/></g><defs><radialGradient id="gFront" gradientUnits="userSpaceOnUse" cx="790" cy="325" r="280" gradientTransform="translate(790 325) scale(1 0.5) translate(-790 -325)"><stop offset="0" stop-color="#cdd6ac" stop-opacity="0"/><stop offset="0.3" stop-color="#cad5a6" stop-opacity="0.15"/><stop offset="0.7" stop-color="#cad5a6" stop-opacity="0.6"/><stop offset="1" stop-color="#cad5a6" stop-opacity="0.8"/></radialGradient></defs><path d="M564,405 L628,345 Q680,300 735,274 L881,281 Q980,300 1084,322 L1048,325 L886,480 L682,418 Z" fill="url(#gFront)"/><defs><filter id="bb" x="-20%" y="-20%" width="140%" height="140%"><feGaussianBlur stdDeviation="2.3"/></filter></defs><g clip-path="url(#cTop)"><g filter="url(#bb)"><ellipse cx="745.7" cy="289.6" rx="6.7" ry="2.6" fill="#334f9e" opacity="0.79" transform="rotate(5 745.7 289.6)"/><ellipse cx="791.4" cy="299.4" rx="5.2" ry="2.6" fill="#2a3f92" opacity="0.75" transform="rotate(1 791.4 299.4)"/><ellipse cx="738.2" cy="278.5" rx="7.7" ry="2.8" fill="#2a3f92" opacity="0.82" transform="rotate(-14 738.2 278.5)"/><ellipse cx="720.6" cy="297.1" rx="6.3" ry="3.7" fill="#334f9e" opacity="0.58" transform="rotate(-15 720.6 297.1)"/><ellipse cx="786.4" cy="276.9" rx="9.8" ry="3.7" fill="#334f9e" opacity="0.89" transform="rotate(-8 786.4 276.9)"/><ellipse cx="673.6" cy="283.8" rx="8.7" ry="3.9" fill="#8a3a18" opacity="0.80" transform="rotate(-17 673.6 283.8)"/><ellipse cx="757.0" cy="303.1" rx="5.5" ry="2.7" fill="#334f9e" opacity="0.68" transform="rotate(-6 757.0 303.1)"/><ellipse cx="765.2" cy="285.0" rx="7.1" ry="3.5" fill="#334f9e" opacity="0.76" transform="rotate(-14 765.2 285.0)"/><ellipse cx="748.6" cy="283.9" rx="7.3" ry="4.2" fill="#8a3a18" opacity="0.79" transform="rotate(4 748.6 283.9)"/><ellipse cx="757.2" cy="282.3" rx="5.2" ry="2.8" fill="#9a5a22" opacity="0.57" transform="rotate(6 757.2 282.3)"/><ellipse cx="688.1" cy="283.1" rx="6.3" ry="3.2" fill="#6cbcd0" opacity="0.60" transform="rotate(-14 688.1 283.1)"/><ellipse cx="750.3" cy="275.1" rx="9.5" ry="3.1" fill="#5aaccc" opacity="0.68" transform="rotate(8 750.3 275.1)"/><ellipse cx="785.1" cy="304.1" rx="9.5" ry="3.9" fill="#3d6aae" opacity="0.77" transform="rotate(3 785.1 304.1)"/><ellipse cx="737.9" cy="294.3" rx="7.3" ry="4.2" fill="#9a5a22" opacity="0.89" transform="rotate(4 737.9 294.3)"/><ellipse cx="822.1" cy="293.6" rx="9.1" ry="3.3" fill="#9a5a22" opacity="0.82" transform="rotate(-9 822.1 293.6)"/><ellipse cx="745.0" cy="299.7" rx="5.0" ry="3.6" fill="#9a5a22" opacity="0.89" transform="rotate(2 745.0 299.7)"/><ellipse cx="731.2" cy="291.7" rx="8.8" ry="3.9" fill="#8a3a18" opacity="0.60" transform="rotate(2 731.2 291.7)"/><ellipse cx="677.9" cy="286.2" rx="8.2" ry="2.2" fill="#7a2e12" opacity="0.72" transform="rotate(-15 677.9 286.2)"/><ellipse cx="668.7" cy="322.0" rx="9.8" ry="2.7" fill="#8a3a18" opacity="0.86" transform="rotate(7 668.7 322.0)"/><ellipse cx="795.6" cy="300.0" rx="5.4" ry="3.7" fill="#3d6aae" opacity="0.59" transform="rotate(-6 795.6 300.0)"/><ellipse cx="719.1" cy="288.7" rx="10.2" ry="3.0" fill="#8a3a18" opacity="0.88" transform="rotate(2 719.1 288.7)"/><ellipse cx="726.4" cy="272.0" rx="7.4" ry="3.5" fill="#7a2e12" opacity="0.70" transform="rotate(-5 726.4 272.0)"/><ellipse cx="774.7" cy="298.7" rx="7.0" ry="3.4" fill="#8a3a18" opacity="0.76" transform="rotate(-18 774.7 298.7)"/><ellipse cx="748.0" cy="287.4" rx="5.4" ry="2.3" fill="#7a2e12" opacity="0.57" transform="rotate(-12 748.0 287.4)"/><ellipse cx="832.4" cy="342.2" rx="5.8" ry="4.1" fill="#5aaccc" opacity="0.75" transform="rotate(-12 832.4 342.2)"/><ellipse cx="797.6" cy="352.2" rx="5.6" ry="3.5" fill="#7a2e12" opacity="0.70" transform="rotate(-6 797.6 352.2)"/><ellipse cx="839.8" cy="331.0" rx="10.9" ry="2.4" fill="#8a3a18" opacity="0.80" transform="rotate(3 839.8 331.0)"/><ellipse cx="876.2" cy="355.3" rx="8.2" ry="2.5" fill="#3d6aae" opacity="0.65" transform="rotate(-12 876.2 355.3)"/><ellipse cx="899.9" cy="343.6" rx="10.2" ry="3.3" fill="#2a3f92" opacity="0.78" transform="rotate(-4 899.9 343.6)"/><ellipse cx="872.9" cy="350.5" rx="9.5" ry="2.7" fill="#8a3a18" opacity="0.72" transform="rotate(-12 872.9 350.5)"/><ellipse cx="835.3" cy="352.6" rx="7.3" ry="4.2" fill="#9a5a22" opacity="0.87" transform="rotate(2 835.3 352.6)"/><ellipse cx="832.4" cy="369.3" rx="9.4" ry="3.8" fill="#6cbcd0" opacity="0.80" transform="rotate(-14 832.4 369.3)"/><ellipse cx="810.4" cy="382.3" rx="8.5" ry="3.3" fill="#7a2e12" opacity="0.57" transform="rotate(-3 810.4 382.3)"/><ellipse cx="748.2" cy="349.6" rx="5.9" ry="4.1" fill="#334f9e" opacity="0.85" transform="rotate(-16 748.2 349.6)"/><ellipse cx="944.2" cy="360.5" rx="7.4" ry="4.1" fill="#5aaccc" opacity="0.64" transform="rotate(-3 944.2 360.5)"/><ellipse cx="810.3" cy="340.9" rx="8.5" ry="3.2" fill="#9a5a22" opacity="0.62" transform="rotate(1 810.3 340.9)"/><ellipse cx="853.7" cy="362.8" rx="9.0" ry="2.8" fill="#7a2e12" opacity="0.88" transform="rotate(6 853.7 362.8)"/><ellipse cx="922.3" cy="351.0" rx="8.4" ry="2.4" fill="#7a2e12" opacity="0.62" transform="rotate(-11 922.3 351.0)"/><ellipse cx="948.0" cy="339.2" rx="10.3" ry="2.9" fill="#3d6aae" opacity="0.70" transform="rotate(-4 948.0 339.2)"/><ellipse cx="801.6" cy="384.8" rx="9.8" ry="3.3" fill="#6cbcd0" opacity="0.84" transform="rotate(-10 801.6 384.8)"/><ellipse cx="786.3" cy="324.1" rx="5.8" ry="2.4" fill="#334f9e" opacity="0.81" transform="rotate(-14 786.3 324.1)"/><ellipse cx="842.9" cy="358.6" rx="7.1" ry="3.6" fill="#9a5a22" opacity="0.73" transform="rotate(-11 842.9 358.6)"/><ellipse cx="864.1" cy="347.7" rx="8.8" ry="3.9" fill="#2a3f92" opacity="0.55" transform="rotate(2 864.1 347.7)"/><ellipse cx="823.6" cy="342.4" rx="9.4" ry="3.3" fill="#8a3a18" opacity="0.75" transform="rotate(-15 823.6 342.4)"/><ellipse cx="925.0" cy="343.4" rx="5.9" ry="2.3" fill="#7a2e12" opacity="0.75" transform="rotate(-14 925.0 343.4)"/><ellipse cx="881.1" cy="357.9" rx="10.4" ry="3.8" fill="#2a3f92" opacity="0.86" transform="rotate(-13 881.1 357.9)"/><ellipse cx="850.1" cy="356.0" rx="9.7" ry="4.0" fill="#8a3a18" opacity="0.89" transform="rotate(1 850.1 356.0)"/><ellipse cx="884.1" cy="345.8" rx="6.0" ry="3.8" fill="#3d6aae" opacity="0.86" transform="rotate(-17 884.1 345.8)"/><ellipse cx="988.2" cy="341.6" rx="10.6" ry="3.8" fill="#7a2e12" opacity="0.83" transform="rotate(-11 988.2 341.6)"/><ellipse cx="992.7" cy="344.7" rx="10.2" ry="3.9" fill="#334f9e" opacity="0.62" transform="rotate(6 992.7 344.7)"/><ellipse cx="963.9" cy="358.8" rx="10.2" ry="2.6" fill="#7a2e12" opacity="0.62" transform="rotate(-9 963.9 358.8)"/><ellipse cx="1031.2" cy="333.8" rx="6.7" ry="3.5" fill="#8a3a18" opacity="0.79" transform="rotate(4 1031.2 333.8)"/><ellipse cx="987.2" cy="349.5" rx="10.3" ry="2.7" fill="#9a5a22" opacity="0.89" transform="rotate(-11 987.2 349.5)"/><ellipse cx="1009.9" cy="352.8" rx="9.4" ry="2.8" fill="#9a5a22" opacity="0.89" transform="rotate(-15 1009.9 352.8)"/><ellipse cx="1002.6" cy="345.2" rx="5.3" ry="3.1" fill="#9a5a22" opacity="0.87" transform="rotate(-4 1002.6 345.2)"/><ellipse cx="630.7" cy="374.9" rx="9.0" ry="2.9" fill="#334f9e" opacity="0.88" transform="rotate(6 630.7 374.9)"/><ellipse cx="604.0" cy="381.4" rx="5.7" ry="4.0" fill="#9a5a22" opacity="0.78" transform="rotate(-10 604.0 381.4)"/><ellipse cx="627.1" cy="379.5" rx="6.2" ry="3.5" fill="#5aaccc" opacity="0.79" transform="rotate(5 627.1 379.5)"/><ellipse cx="619.2" cy="386.7" rx="8.3" ry="2.2" fill="#9a5a22" opacity="0.62" transform="rotate(2 619.2 386.7)"/><ellipse cx="617.1" cy="386.9" rx="7.7" ry="3.6" fill="#6cbcd0" opacity="0.83" transform="rotate(7 617.1 386.9)"/><ellipse cx="637.3" cy="376.6" rx="6.7" ry="3.5" fill="#7a2e12" opacity="0.58" transform="rotate(7 637.3 376.6)"/><ellipse cx="644.9" cy="402.6" rx="9.8" ry="2.5" fill="#2a3f92" opacity="0.64" transform="rotate(-6 644.9 402.6)"/><ellipse cx="650.2" cy="389.5" rx="7.5" ry="3.5" fill="#8a3a18" opacity="0.80" transform="rotate(-8 650.2 389.5)"/><ellipse cx="625.6" cy="396.7" rx="9.1" ry="4.0" fill="#334f9e" opacity="0.82" transform="rotate(-12 625.6 396.7)"/><ellipse cx="660.5" cy="376.7" rx="7.8" ry="3.3" fill="#334f9e" opacity="0.71" transform="rotate(3 660.5 376.7)"/><ellipse cx="589.1" cy="364.1" rx="8.6" ry="4.1" fill="#6cbcd0" opacity="0.76" transform="rotate(1 589.1 364.1)"/><ellipse cx="574.2" cy="392.4" rx="8.3" ry="4.0" fill="#6cbcd0" opacity="0.71" transform="rotate(2 574.2 392.4)"/><ellipse cx="657.5" cy="385.4" rx="9.7" ry="3.2" fill="#8a3a18" opacity="0.65" transform="rotate(-16 657.5 385.4)"/><ellipse cx="635.6" cy="401.7" rx="6.9" ry="3.3" fill="#3d6aae" opacity="0.60" transform="rotate(-8 635.6 401.7)"/><ellipse cx="656.3" cy="399.4" rx="7.5" ry="2.9" fill="#6cbcd0" opacity="0.70" transform="rotate(-13 656.3 399.4)"/><ellipse cx="573.5" cy="404.7" rx="8.5" ry="3.6" fill="#5aaccc" opacity="0.72" transform="rotate(7 573.5 404.7)"/></g></g><path d="M830,312 Q860,290 882,281 Q980,300 1084,322 L1059,312 Q950,298 830,312 Z" fill="#c2cbb0" opacity="0.65"/><g clip-path="url(#cShellTop)"><rect x="500" y="240" width="620" height="490" filter="url(#tShellTop)"/></g><g clip-path="url(#cBand)"><rect x="500" y="240" width="620" height="490" filter="url(#tBand)"/></g><g clip-path="url(#cDiag)"><rect x="500" y="240" width="620" height="490" filter="url(#tWall)"/></g><g clip-path="url(#cLon)"><rect x="500" y="240" width="620" height="490" filter="url(#tWall)"/></g><path d="M530,403 L566,368 L573,394 L564,405 L541,428 Z" fill="#c8cbbd"/></svg>
<svg style="position:absolute;left:440px;top:620px;" width="80" height="60" viewBox="0 0 80 60"><path d="M45 47L59 18" stroke="#f0a0a0" stroke-width="0.8"/><path d="M45 47L18 37" stroke="#e8e080" stroke-width="0.8"/><path d="M45 47L33 37" stroke="#90e090" stroke-width="0.8"/><path d="M56 17L62 15L60 21Z" fill="#d02020"/><ellipse cx="59" cy="18.5" rx="3" ry="2.5" fill="#c01818"/><ellipse cx="18" cy="37.5" rx="3.5" ry="2.2" fill="#a09028"/><ellipse cx="33" cy="37.5" rx="3.3" ry="2.6" fill="#20a020"/><text x="59.5" y="21" font-size="11" fill="#111" font-family="Liberation Sans">X</text><text x="19.5" y="39" font-size="11" fill="#111" font-family="Liberation Sans">Y</text><text x="34" y="38" font-size="11" fill="#111" font-family="Liberation Sans">Z</text></svg>
<div style="position:absolute;left:1160px;top:545.6px;width:9px;height:186.6px;background:linear-gradient(#23338a 0%,#2c4f9e 12%,#3772b0 25%,#55a8c8 38%,#86d2d8 45%,#d9eccf 50%,#e6e290 58%,#d8c05a 68%,#b7862a 80%,#98501a 90%,#761a0c 100%);"></div>
<div style="position:absolute;left:1169px;top:545.1px;width:5px;height:1px;background:#aaa;"></div>
<div style="position:absolute;left:1178.3px;top:539.1px;font-size:11px;line-height:13px;color:#5e5e5e;font-weight:normal;white-space:nowrap;line-height:13px;">3.0e+00</div>
<div style="position:absolute;left:1169px;top:560.65px;width:5px;height:1px;background:#aaa;"></div>
<div style="position:absolute;left:1178.3px;top:554.65px;font-size:11px;line-height:13px;color:#5e5e5e;font-weight:normal;white-space:nowrap;line-height:13px;">2.5</div>
<div style="position:absolute;left:1169px;top:576.2px;width:5px;height:1px;background:#aaa;"></div>
<div style="position:absolute;left:1178.3px;top:570.2px;font-size:11px;line-height:13px;color:#5e5e5e;font-weight:normal;white-space:nowrap;line-height:13px;">2</div>
<div style="position:absolute;left:1169px;top:591.75px;width:5px;height:1px;background:#aaa;"></div>
<div style="position:absolute;left:1178.3px;top:585.75px;font-size:11px;line-height:13px;color:#5e5e5e;font-weight:normal;white-space:nowrap;line-height:13px;">1.5</div>
<div style="position:absolute;left:1169px;top:607.3000000000001px;width:5px;height:1px;background:#aaa;"></div>
<div style="position:absolute;left:1178.3px;top:601.3000000000001px;font-size:11px;line-height:13px;color:#5e5e5e;font-weight:normal;white-space:nowrap;line-height:13px;">1</div>
<div style="position:absolute;left:1169px;top:622.85px;width:5px;height:1px;background:#aaa;"></div>
<div style="position:absolute;left:1178.3px;top:616.85px;font-size:11px;line-height:13px;color:#5e5e5e;font-weight:normal;white-space:nowrap;line-height:13px;">0.5</div>
<div style="position:absolute;left:1169px;top:638.4px;width:5px;height:1px;background:#aaa;"></div>
<div style="position:absolute;left:1178.3px;top:632.4px;font-size:11px;line-height:13px;color:#5e5e5e;font-weight:normal;white-space:nowrap;line-height:13px;">0</div>
<div style="position:absolute;left:1169px;top:653.95px;width:5px;height:1px;background:#aaa;"></div>
<div style="position:absolute;left:1177.6px;top:647.95px;font-size:11px;line-height:13px;color:#5e5e5e;font-weight:normal;white-space:nowrap;line-height:13px;">-0.5</div>
<div style="position:absolute;left:1169px;top:669.5px;width:5px;height:1px;background:#aaa;"></div>
<div style="position:absolute;left:1177.6px;top:663.5px;font-size:11px;line-height:13px;color:#5e5e5e;font-weight:normal;white-space:nowrap;line-height:13px;">-1</div>
<div style="position:absolute;left:1169px;top:685.05px;width:5px;height:1px;background:#aaa;"></div>
<div style="position:absolute;left:1177.6px;top:679.05px;font-size:11px;line-height:13px;color:#5e5e5e;font-weight:normal;white-space:nowrap;line-height:13px;">-1.5</div>
<div style="position:absolute;left:1169px;top:700.6px;width:5px;height:1px;background:#aaa;"></div>
<div style="position:absolute;left:1177.6px;top:694.6px;font-size:11px;line-height:13px;color:#5e5e5e;font-weight:normal;white-space:nowrap;line-height:13px;">-2</div>
<div style="position:absolute;left:1169px;top:716.15px;width:5px;height:1px;background:#aaa;"></div>
<div style="position:absolute;left:1177.6px;top:710.15px;font-size:11px;line-height:13px;color:#5e5e5e;font-weight:normal;white-space:nowrap;line-height:13px;">-2.5</div>
<div style="position:absolute;left:1169px;top:731.7px;width:5px;height:1px;background:#aaa;"></div>
<div style="position:absolute;left:1177.6px;top:725.7px;font-size:11px;line-height:13px;color:#5e5e5e;font-weight:normal;white-space:nowrap;line-height:13px;">-3.0e+00</div>
<div style="position:absolute;left:1180px;top:633px;width:100px;height:14px;transform:rotate(-90deg);transform-origin:50% 50%;text-align:center;font-size:11.4px;line-height:14px;color:#666;white-space:nowrap;">dVp_Percentage&nbsp;&nbsp;()</div>
<svg style="position:absolute;left:49.4px;top:49.0px;overflow:visible;" width="20" height="20" viewBox="0 0 20 20"><path d="M1 5.5H5.5L6.8 4.2H9.5L10.5 5.5V16H1Z" fill="#f2b95c" stroke="#a98a4c" stroke-width="0.7"/><path d="M2.6 8H18.5V17.5H2.6Z" fill="#f6d872" stroke="#a98a4c" stroke-width="0.7"/><path d="M15.5 1.2L18.8 5H17V8.5H14V5H12.2Z" fill="#1d8fd6"/></svg>
<svg style="position:absolute;left:77.6px;top:49.0px;overflow:visible;" width="20" height="20" viewBox="0 0 20 20"><path d="M1 5.5H5.5L6.8 4.2H9.5L10.5 5.5V16H1Z" fill="#f2b95c" stroke="#a98a4c" stroke-width="0.7"/><path d="M2.6 8H18.5V17.5H2.6Z" fill="#f6d872" stroke="#a98a4c" stroke-width="0.7"/><path d="M14 1.5H17V6H19L15.5 10L12 6H14Z" fill="#a8da8c" stroke="#6d8a5e" stroke-width="0.6"/></svg>
<svg style="position:absolute;left:106.0px;top:49.0px;overflow:visible;" width="20" height="20" viewBox="0 0 20 20"><rect x="3" y="12" width="15" height="6" rx="1.3" fill="#dcdcdc" stroke="#9a9a9a" stroke-width="0.8"/><circle cx="5.6" cy="15" r="0.8" fill="#999"/><path d="M8.5 1H12.5V7H15.5L10.5 13L5.5 7H8.5Z" fill="#a8da8c" stroke="#6d8a5e" stroke-width="0.6"/></svg>
<svg style="position:absolute;left:133.8px;top:49.0px;overflow:visible;" width="20" height="20" viewBox="0 0 20 20"><path d="M2.5 5V2.5H5M15 2.5H17.5V5M2.5 15V17.5H5M17.5 15V17.5H15" fill="none" stroke="#1d8fd6" stroke-width="1.6"/><path d="M16 4L14.5 11L12.6 9.2L7.5 14.5L5.3 12.3L10.5 7.2L8.7 5.4Z" fill="#f7c21c" stroke="#8a7a30" stroke-width="0.5"/></svg>
<svg style="position:absolute;left:162.7px;top:49.0px;overflow:visible;" width="20" height="20" viewBox="0 0 20 20"><path d="M2 11L16 2.5L18.5 1.5L19 3L17.5 5L10 18.5Z" fill="#fff" stroke="#aaa" stroke-width="0.7"/><path d="M4 11.5L7 9.5L6.3 13Z" fill="#d02020"/><path d="M7.3 14L10 8L11.3 9L8.6 15.3Z" fill="#1aa030"/><path d="M9.7 16.3L13.5 6.2L15 7.3L11.2 17.2Z" fill="#1a3a9a"/></svg>
<div style="position:absolute;left:188px;top:48px;width:1px;height:1.2px;background:#a8a8a8;"></div>
<div style="position:absolute;left:188px;top:52px;width:1px;height:1.2px;background:#a8a8a8;"></div>
<div style="position:absolute;left:188px;top:56px;width:1px;height:1.2px;background:#a8a8a8;"></div>
<div style="position:absolute;left:188px;top:60px;width:1px;height:1.2px;background:#a8a8a8;"></div>
<div style="position:absolute;left:188px;top:64px;width:1px;height:1.2px;background:#a8a8a8;"></div>
<div style="position:absolute;left:188px;top:68px;width:1px;height:1.2px;background:#a8a8a8;"></div>
<svg style="position:absolute;left:194.8px;top:49.0px;overflow:visible;" width="20" height="20" viewBox="0 0 20 20"><path d="M2 3.5L4 2H10L8.5 3.5Z" fill="#e8e8e0" stroke="#888" stroke-width="0.4"/><path d="M2 3.5H4.5V15H2Z" fill="#b8bca8" stroke="#888" stroke-width="0.5"/><path d="M4.5 3.5H8.5L10 2V13.5L8.5 15H4.5Z" fill="#f2f0f2" stroke="#888" stroke-width="0.5"/><path d="M6 5.5H7.5M6 7H7.5" stroke="#bbb" stroke-width="0.5"/><path d="M9 3.5L11 2H17L15.5 3.5Z" fill="#e8e8e0" stroke="#888" stroke-width="0.4"/><path d="M9 3.5H11.5V15H9Z" fill="#b8bca8" stroke="#888" stroke-width="0.5"/><path d="M11.5 3.5H15.5L17 2V13.5L15.5 15H11.5Z" fill="#f2f0f2" stroke="#888" stroke-width="0.5"/><path d="M13 5.5H14.5M13 7H14.5" stroke="#bbb" stroke-width="0.5"/><path d="M5 15V17H15V15" fill="none" stroke="#aaa" stroke-width="0.8"/><circle cx="10" cy="17.3" r="2" fill="#8fd06a"/></svg>
<svg style="position:absolute;left:223.2px;top:49.0px;overflow:visible;" width="20" height="20" viewBox="0 0 20 20"><path d="M2 3.5L4 2H10L8.5 3.5Z" fill="#e8e8e0" stroke="#888" stroke-width="0.4"/><path d="M2 3.5H4.5V15H2Z" fill="#b8bca8" stroke="#888" stroke-width="0.5"/><path d="M4.5 3.5H8.5L10 2V13.5L8.5 15H4.5Z" fill="#f2f0f2" stroke="#888" stroke-width="0.5"/><path d="M6 5.5H7.5M6 7H7.5" stroke="#bbb" stroke-width="0.5"/><path d="M9 3.5L11 2H17L15.5 3.5Z" fill="#e8e8e0" stroke="#888" stroke-width="0.4"/><path d="M9 3.5H11.5V15H9Z" fill="#b8bca8" stroke="#888" stroke-width="0.5"/><path d="M11.5 3.5H15.5L17 2V13.5L15.5 15H11.5Z" fill="#f2f0f2" stroke="#888" stroke-width="0.5"/><path d="M13 5.5H14.5M13 7H14.5" stroke="#bbb" stroke-width="0.5"/><path d="M5 15V17H15V15" fill="none" stroke="#aaa" stroke-width="0.8"/><path d="M8.5 15.8L11.5 18.8M11.5 15.8L8.5 18.8" stroke="#e02a1a" stroke-width="1.3"/></svg>
<svg style="position:absolute;left:251.3px;top:49.0px;overflow:visible;" width="20" height="20" viewBox="0 0 20 20"><path d="M4.6 6A7 7 0 1 0 9 3.2" fill="none" stroke="#96cf78" stroke-width="2.2"/><path d="M2 4.5L6.5 3.5L5 8.5Z" fill="#96cf78"/><path d="M10 5.5V11" stroke="#e9a614" stroke-width="1.6"/></svg>
<div style="position:absolute;left:277px;top:48px;width:1px;height:1.2px;background:#a8a8a8;"></div>
<div style="position:absolute;left:277px;top:52px;width:1px;height:1.2px;background:#a8a8a8;"></div>
<div style="position:absolute;left:277px;top:56px;width:1px;height:1.2px;background:#a8a8a8;"></div>
<div style="position:absolute;left:277px;top:60px;width:1px;height:1.2px;background:#a8a8a8;"></div>
<div style="position:absolute;left:277px;top:64px;width:1px;height:1.2px;background:#a8a8a8;"></div>
<div style="position:absolute;left:277px;top:68px;width:1px;height:1.2px;background:#a8a8a8;"></div>
<svg style="position:absolute;left:283.7px;top:49.0px;overflow:visible;" width="20" height="20" viewBox="0 0 20 20"><g opacity="1"><path d="M6 7C9 4 16 4 16.5 9.5C17 13 15 15 14 16" fill="none" stroke="#e41c1c" stroke-width="3.2"/><path d="M1.5 12.5L3.5 4.5L10 9.5Z" fill="#e41c1c"/></g></svg>
<svg style="position:absolute;left:312.2px;top:49.0px;overflow:visible;" width="20" height="20" viewBox="0 0 20 20"><g opacity="1"><path d="M14 7C11 4 4 4 3.5 9.5C3 13 5 15 6 16" fill="none" stroke="#b8dca8" stroke-width="3.2"/><path d="M18.5 12.5L16.5 4.5L10 9.5Z" fill="#b8dca8"/></g></svg>
<div style="position:absolute;left:337.4px;top:48px;width:1px;height:1.2px;background:#a8a8a8;"></div>
<div style="position:absolute;left:337.4px;top:52px;width:1px;height:1.2px;background:#a8a8a8;"></div>
<div style="position:absolute;left:337.4px;top:56px;width:1px;height:1.2px;background:#a8a8a8;"></div>
<div style="position:absolute;left:337.4px;top:60px;width:1px;height:1.2px;background:#a8a8a8;"></div>
<div style="position:absolute;left:337.4px;top:64px;width:1px;height:1.2px;background:#a8a8a8;"></div>
<div style="position:absolute;left:337.4px;top:68px;width:1px;height:1.2px;background:#a8a8a8;"></div>
<svg style="position:absolute;left:343.7px;top:49.0px;overflow:visible;" width="20" height="20" viewBox="0 0 20 20"><path d="M3 9L5 8H9V17L7 18.5H3Z" fill="#c9cbb8" stroke="#777" stroke-width="0.6"/><rect x="5.5" y="9" width="3.6" height="9" fill="#f4f2f4" stroke="#999" stroke-width="0.5"/><path d="M8 11L14 5.5L12 3.5L18 2.5L17 8.5L15.3 6.8L9.3 12.5Z" fill="#a8da8c" stroke="#6d8a5e" stroke-width="0.6"/></svg>
<svg style="position:absolute;left:372.1px;top:49.0px;overflow:visible;" width="20" height="20" viewBox="0 0 20 20"><rect x="3" y="1" width="10.5" height="17" rx="1" fill="#d8d8d8" stroke="#9a9a9a" stroke-width="0.7"/><defs><linearGradient id="gcb" x1="0" y1="0" x2="0" y2="1"><stop offset="0" stop-color="#3fb3e8"/><stop offset="0.6" stop-color="#2f6fc8"/><stop offset="1" stop-color="#5a2f8f"/></linearGradient></defs><rect x="3.5" y="8.5" width="9.5" height="9" fill="url(#gcb)"/><path d="M1.5 7.5V18.5H18V9" fill="none" stroke="#888" stroke-width="0.7" stroke-dasharray="1.5 1.5"/><path d="M14 13L18 17" stroke="#555" stroke-width="1.4"/><path d="M13.5 12.5L16 13L14 15Z" fill="#444"/></svg>
<svg style="position:absolute;left:400.5px;top:49.0px;overflow:visible;" width="20" height="20" viewBox="0 0 20 20"><path d="M10 1.5C4.5 1.5 1 5.5 1.5 10.5C2 15.5 6 18.5 9 18C11 17.5 10 15.5 11.5 14.5C13 13.5 17.5 14.5 18 11C18.8 6 16 1.5 10 1.5Z" fill="#f4d3a0" stroke="#8a7a60" stroke-width="0.6"/><circle cx="6" cy="7" r="1.7" fill="#3aa8e8"/><circle cx="10.5" cy="5" r="1.7" fill="#3aa040"/><circle cx="6" cy="12.5" r="1.7" fill="#e02020"/><path d="M9 18L17 4" stroke="#b08040" stroke-width="1.6"/><path d="M16 5L18.5 1L19 3Z" fill="#fff" stroke="#888" stroke-width="0.5"/><path d="M16 18L17.3 19.3L18.6 18" fill="none" stroke="#333" stroke-width="0.8"/></svg>
<div style="position:absolute;left:430.8px;top:48px;width:1px;height:1.2px;background:#a8a8a8;"></div>
<div style="position:absolute;left:430.8px;top:52px;width:1px;height:1.2px;background:#a8a8a8;"></div>
<div style="position:absolute;left:430.8px;top:56px;width:1px;height:1.2px;background:#a8a8a8;"></div>
<div style="position:absolute;left:430.8px;top:60px;width:1px;height:1.2px;background:#a8a8a8;"></div>
<div style="position:absolute;left:430.8px;top:64px;width:1px;height:1.2px;background:#a8a8a8;"></div>
<div style="position:absolute;left:430.8px;top:68px;width:1px;height:1.2px;background:#a8a8a8;"></div>
<svg style="position:absolute;left:438.0px;top:49.0px;overflow:visible;" width="20" height="20" viewBox="0 0 20 20"><rect x="3" y="2.5" width="3.5" height="14.5" fill="#a8da8c" stroke="#6d7a5e" stroke-width="0.7"/><path d="M17 2.5V17L7.5 9.75Z" fill="#a8da8c" stroke="#6d7a5e" stroke-width="0.7"/></svg>
<svg style="position:absolute;left:466.5px;top:49.0px;overflow:visible;" width="20" height="20" viewBox="0 0 20 20"><path d="M11 2.5V17L1.5 9.75Z" fill="#a8da8c" stroke="#6d7a5e" stroke-width="0.7"/><rect x="12.5" y="2.5" width="3.5" height="14.5" fill="#a8da8c" stroke="#6d7a5e" stroke-width="0.7"/></svg>
<svg style="position:absolute;left:495.0px;top:49.0px;overflow:visible;" width="20" height="20" viewBox="0 0 20 20"><path d="M5 2.5V17L16 9.75Z" fill="#a8da8c" stroke="#6d7a5e" stroke-width="0.7"/></svg>
<svg style="position:absolute;left:521.7px;top:49.0px;overflow:visible;" width="20" height="20" viewBox="0 0 20 20"><rect x="3" y="2.5" width="3.5" height="14.5" fill="#a8da8c" stroke="#6d7a5e" stroke-width="0.7"/><path d="M8 2.5V17L18 9.75Z" fill="#a8da8c" stroke="#6d7a5e" stroke-width="0.7"/></svg>
<svg style="position:absolute;left:550.6px;top:49.0px;overflow:visible;" width="20" height="20" viewBox="0 0 20 20"><path d="M3 2.5V17L12.5 9.75Z" fill="#a8da8c" stroke="#6d7a5e" stroke-width="0.7"/><rect x="13.5" y="2.5" width="3.5" height="14.5" fill="#a8da8c" stroke="#6d7a5e" stroke-width="0.7"/></svg>
<svg style="position:absolute;left:578.6px;top:49.0px;overflow:visible;" width="20" height="20" viewBox="0 0 20 20"><path d="M3.5 11V5H12V2.5L16.5 6L12 9.5V7.5H6.2V11Z" fill="#a8da8c" stroke="#6d7a5e" stroke-width="0.7"/><path d="M16.5 9V15H8V17.5L3.5 14L8 10.5V12.5H13.8V9Z" fill="#a8da8c" stroke="#6d7a5e" stroke-width="0.7"/></svg>
<div style="position:absolute;left:609px;top:48px;width:1px;height:1.2px;background:#a8a8a8;"></div>
<div style="position:absolute;left:609px;top:52px;width:1px;height:1.2px;background:#a8a8a8;"></div>
<div style="position:absolute;left:609px;top:56px;width:1px;height:1.2px;background:#a8a8a8;"></div>
<div style="position:absolute;left:609px;top:60px;width:1px;height:1.2px;background:#a8a8a8;"></div>
<div style="position:absolute;left:609px;top:64px;width:1px;height:1.2px;background:#a8a8a8;"></div>
<div style="position:absolute;left:609px;top:68px;width:1px;height:1.2px;background:#a8a8a8;"></div>
<div style="position:absolute;left:612px;top:54.5px;font-size:9px;line-height:11px;color:#363636;font-weight:normal;white-space:nowrap;">Time:</div>
<div style="position:absolute;left:636.3px;top:51.7px;width:83.2px;height:12.6px;background:#fff;"></div>
<div style="position:absolute;left:638.5px;top:54.5px;font-size:9px;line-height:11px;color:#222;font-weight:normal;white-space:nowrap;">0</div>
<div style="position:absolute;left:722.6px;top:51.7px;width:17.2px;height:12.6px;background:#f4f4f4;border-radius:3px;"></div>
<div style="position:absolute;left:723.5px;top:54.5px;font-size:9px;line-height:11px;color:#c8c8c8;font-weight:normal;white-space:nowrap;">0</div>
<svg style="position:absolute;left:732px;top:52px;" width="8" height="12" viewBox="0 0 8 12"><path d="M1.5 4L4 1.5L6.5 4M1.5 8L4 10.5L6.5 8" fill="none" stroke="#bbb" stroke-width="0.8"/></svg>
<div style="position:absolute;left:746px;top:48px;width:1px;height:1.2px;background:#a8a8a8;"></div>
<div style="position:absolute;left:746px;top:52px;width:1px;height:1.2px;background:#a8a8a8;"></div>
<div style="position:absolute;left:746px;top:56px;width:1px;height:1.2px;background:#a8a8a8;"></div>
<div style="position:absolute;left:746px;top:60px;width:1px;height:1.2px;background:#a8a8a8;"></div>
<div style="position:absolute;left:746px;top:64px;width:1px;height:1.2px;background:#a8a8a8;"></div>
<div style="position:absolute;left:746px;top:68px;width:1px;height:1.2px;background:#a8a8a8;"></div>
<svg style="position:absolute;left:753.2px;top:49.0px;overflow:visible;" width="20" height="20" viewBox="0 0 20 20"><rect x="1.5" y="4" width="15" height="10" rx="2" fill="#e4e4e4" stroke="#8a8a8a" stroke-width="0.8"/><rect x="5.5" y="2.5" width="6" height="2" fill="#aaa"/><circle cx="9" cy="9" r="3.4" fill="#cfe8ff" stroke="#777" stroke-width="1"/><path d="M13 14.5L18 19" stroke="#1d8fd6" stroke-width="1.8"/><circle cx="12.8" cy="14.2" r="1.8" fill="none" stroke="#1d8fd6" stroke-width="1.3"/></svg>
<svg style="position:absolute;left:780.6px;top:49.0px;overflow:visible;" width="20" height="20" viewBox="0 0 20 20"><rect x="1.5" y="4" width="15" height="10" rx="2" fill="#e4e4e4" stroke="#8a8a8a" stroke-width="0.8"/><rect x="5.5" y="2.5" width="6" height="2" fill="#aaa"/><circle cx="9" cy="9" r="3.4" fill="#cfe8ff" stroke="#777" stroke-width="1"/><path d="M15.5 12.5V19.5M12 16H19" stroke="#1d8fd6" stroke-width="2.2"/></svg>
<div style="position:absolute;left:46px;top:75px;width:27.5px;height:27.5px;background:linear-gradient(#d8d8d8,#cdcdcd);border-radius:2px;"></div>
<svg style="position:absolute;left:49.8px;top:78.8px;overflow:visible;" width="20" height="20" viewBox="0 0 20 20"><defs><linearGradient id="gcb2" x1="0" y1="0" x2="0" y2="1"><stop offset="0" stop-color="#f0a020"/><stop offset="0.3" stop-color="#e8d830"/><stop offset="0.55" stop-color="#40c0b0"/><stop offset="0.8" stop-color="#2a70d0"/><stop offset="1" stop-color="#6a3a9a"/></linearGradient></defs><rect x="6.5" y="2" width="7" height="16" fill="url(#gcb2)" stroke="#8a7a70" stroke-width="0.6"/></svg>
<svg style="position:absolute;left:77.6px;top:78.8px;overflow:visible;" width="20" height="20" viewBox="0 0 20 20"><defs><linearGradient id="gcc1" x1="0" y1="1" x2="1" y2="0"><stop offset="0" stop-color="#4030a0"/><stop offset="0.35" stop-color="#2aa0d0"/><stop offset="0.65" stop-color="#e8d830"/><stop offset="1" stop-color="#f08020"/></linearGradient></defs><rect x="1.5" y="8" width="16.5" height="9" fill="url(#gcc1)" stroke="#8a7a60" stroke-width="0.5"/><circle cx="6" cy="6" r="4.8" fill="#a8da8c" stroke="#6d8a5e" stroke-width="0.7"/><path d="M1.5 12.5H18M8 8V17M13 8V17" stroke="#7a6a40" stroke-width="0.5" opacity="0.7"/></svg>
<svg style="position:absolute;left:106.0px;top:78.8px;overflow:visible;" width="20" height="20" viewBox="0 0 20 20"><defs><linearGradient id="gcc2" x1="0" y1="1" x2="1" y2="0"><stop offset="0" stop-color="#4030a0"/><stop offset="0.35" stop-color="#2aa0d0"/><stop offset="0.65" stop-color="#e8d830"/><stop offset="1" stop-color="#f08020"/></linearGradient></defs><rect x="1.5" y="8" width="16.5" height="9" fill="url(#gcc2)" stroke="#8a7a60" stroke-width="0.5"/><path d="M3 11C1 9 3 7 5 8.5L7 10.5C8.5 12.5 6.5 14.5 4.5 13Z" fill="none" stroke="#111" stroke-width="1.4"/><path d="M7.5 6C6.5 3.5 9 1.5 11 3.5C12.5 5.5 11 7 9.5 8" fill="none" stroke="#111" stroke-width="1.4"/><path d="M1.5 4L3 5M4 2L4.5 3.5" stroke="#333" stroke-width="0.6"/></svg>
<svg style="position:absolute;left:134.6px;top:78.8px;overflow:visible;" width="20" height="20" viewBox="0 0 20 20"><g opacity="1"><path d="M1 7L5.5 3V5.5H14.5V3L19 7L14.5 11V8.5H5.5V11Z" fill="#a8da8c" stroke="#7a9a6a" stroke-width="0.5"/><path d="M1 14.5H19M1.5 12V17M6 13V16M10 13V16M14 13V16M18.5 12V17" stroke="#8a8a7a" stroke-width="0.7"/></g></svg>
<svg style="position:absolute;left:162.7px;top:78.8px;overflow:visible;" width="20" height="20" viewBox="0 0 20 20"><g opacity="1"><path d="M1 7L5.5 3V5.5H14.5V3L19 7L14.5 11V8.5H5.5V11Z" fill="#a8da8c" stroke="#7a9a6a" stroke-width="0.5"/><path d="M1 14.5H19M1.5 12V17M6 13V16M10 13V16M14 13V16M18.5 12V17" stroke="#8a8a7a" stroke-width="0.7"/><text x="12.5" y="17.5" font-size="7" font-weight="bold" font-family="Liberation Sans" fill="#111">c</text></g></svg>
<svg style="position:absolute;left:190.3px;top:78.8px;overflow:visible;" width="20" height="20" viewBox="0 0 20 20"><g opacity="0.45"><path d="M1 7L5.5 3V5.5H14.5V3L19 7L14.5 11V8.5H5.5V11Z" fill="#a8da8c" stroke="#7a9a6a" stroke-width="0.5"/><path d="M1 14.5H19M1.5 12V17M6 13V16M10 13V16M14 13V16M18.5 12V17" stroke="#8a8a7a" stroke-width="0.7"/><text x="13" y="17.5" font-size="7" font-weight="bold" font-family="Liberation Sans" fill="#666">t</text></g></svg>
<svg style="position:absolute;left:218.8px;top:78.8px;overflow:visible;" width="20" height="20" viewBox="0 0 20 20"><g opacity="1"><path d="M1 7L5.5 3V5.5H14.5V3L19 7L14.5 11V8.5H5.5V11Z" fill="#a8da8c" stroke="#7a9a6a" stroke-width="0.5"/><path d="M1 14.5H19M1.5 12V17M6 13V16M10 13V16M14 13V16M18.5 12V17" stroke="#8a8a7a" stroke-width="0.7"/><ellipse cx="15" cy="15" rx="3.5" ry="2" fill="#fff" stroke="#111" stroke-width="0.8"/><circle cx="15" cy="15" r="1.3" fill="#111"/></g></svg>
<div style="position:absolute;left:247px;top:80.6px;width:111.69999999999999px;height:13.800000000000011px;background:#fff;border-radius:4px;box-shadow:0 0.5px 1.5px rgba(0,0,0,0.25);"></div>
<div style="position:absolute;left:266.3px;top:82.0px;font-size:9px;line-height:11px;color:#363636;font-weight:normal;white-space:nowrap;">dVp_Percentage&nbsp;&nbsp;[]</div>
<div style="position:absolute;left:256.9px;top:85.9px;width:3.2px;height:3.2px;border-radius:50%;background:#f0a020;"></div>
<div style="position:absolute;left:346.7px;top:82.1px;width:10.5px;height:10.800000000000011px;background:#1d6ff0;border-radius:3px;"></div>
<svg style="position:absolute;left:346.7px;top:82.1px;" width="11" height="10.800000000000011" viewBox="0 0 11 10.800000000000011"><path d="M3 4.2000000000000055L5.25 1.8000000000000056L7.5 4.2000000000000055M3 6.600000000000006L5.25 9.000000000000005L7.5 6.600000000000006" fill="none" stroke="#fff" stroke-width="1"/></svg>
<div style="position:absolute;left:366.5px;top:80.6px;width:52.2px;height:13.8px;background:#e9e9e9;border-radius:4px;"></div>
<svg style="position:absolute;left:406px;top:82px;" width="11" height="11" viewBox="0 0 11 11"><path d="M3 4L5.25 1.8L7.5 4M3 7L5.25 9.2L7.5 7" fill="none" stroke="#aaa" stroke-width="0.9"/></svg>
<div style="position:absolute;left:429.4px;top:78px;width:1px;height:1.2px;background:#a8a8a8;"></div>
<div style="position:absolute;left:429.4px;top:82px;width:1px;height:1.2px;background:#a8a8a8;"></div>
<div style="position:absolute;left:429.4px;top:86px;width:1px;height:1.2px;background:#a8a8a8;"></div>
<div style="position:absolute;left:429.4px;top:90px;width:1px;height:1.2px;background:#a8a8a8;"></div>
<div style="position:absolute;left:429.4px;top:94px;width:1px;height:1.2px;background:#a8a8a8;"></div>
<div style="position:absolute;left:436.3px;top:80.6px;width:99.49999999999994px;height:13.800000000000011px;background:#fff;border-radius:4px;box-shadow:0 0.5px 1.5px rgba(0,0,0,0.25);"></div>
<div style="position:absolute;left:441.3px;top:82.0px;font-size:9px;line-height:11px;color:#363636;font-weight:normal;white-space:nowrap;">Surface</div>
<div style="position:absolute;left:523.8px;top:82.1px;width:10.5px;height:10.800000000000011px;background:#1d6ff0;border-radius:3px;"></div>
<svg style="position:absolute;left:523.8px;top:82.1px;" width="11" height="10.800000000000011" viewBox="0 0 11 10.800000000000011"><path d="M3 4.2000000000000055L5.25 1.8000000000000056L7.5 4.2000000000000055M3 6.600000000000006L5.25 9.000000000000005L7.5 6.600000000000006" fill="none" stroke="#fff" stroke-width="1"/></svg>
<div style="position:absolute;left:547px;top:78px;width:1px;height:1.2px;background:#a8a8a8;"></div>
<div style="position:absolute;left:547px;top:82px;width:1px;height:1.2px;background:#a8a8a8;"></div>
<div style="position:absolute;left:547px;top:86px;width:1px;height:1.2px;background:#a8a8a8;"></div>
<div style="position:absolute;left:547px;top:90px;width:1px;height:1.2px;background:#a8a8a8;"></div>
<div style="position:absolute;left:547px;top:94px;width:1px;height:1.2px;background:#a8a8a8;"></div>
<svg style="position:absolute;left:553.8px;top:78.8px;overflow:visible;" width="20" height="20" viewBox="0 0 20 20"><path d="M2 2L18 18M18 2L2 18" stroke="#555540" stroke-width="1"/><path d="M1.5 1.5L7 2.5L2.5 7Z M18.5 1.5L13 2.5L17.5 7Z M1.5 18.5L7 17.5L2.5 13Z M18.5 18.5L13 17.5L17.5 13Z" fill="#a8da8c" stroke="#6d8a5e" stroke-width="0.5"/></svg>
<svg style="position:absolute;left:581.6px;top:78.8px;overflow:visible;" width="20" height="20" viewBox="0 0 20 20"><circle cx="10" cy="10" r="2.3" fill="#1d8fd6"/><path d="M2 2L6.5 6.5M18 2L13.5 6.5M2 18L6.5 13.5M18 18L13.5 13.5" stroke="#555540" stroke-width="0.8"/><path d="M7 7L2.5 6L6 2.5Z M13 7L17.5 6L14 2.5Z M7 13L2.5 14L6 17.5Z M13 13L17.5 14L14 17.5Z" fill="#a8da8c" stroke="#6d8a5e" stroke-width="0.5"/></svg>
<svg style="position:absolute;left:610.0px;top:78.8px;overflow:visible;" width="20" height="20" viewBox="0 0 20 20"><path d="M1.5 5V1.5H5M9 1.5H12M1.5 9V12" fill="none" stroke="#999" stroke-width="0.8" stroke-dasharray="1.5 1"/><circle cx="9.5" cy="10" r="4.5" fill="#d8ecff" stroke="#888" stroke-width="1.5"/><path d="M13 13.5L17.5 18" stroke="#888" stroke-width="2"/></svg>
<svg style="position:absolute;left:637.4px;top:78.8px;overflow:visible;" width="20" height="20" viewBox="0 0 20 20"><path d="M11.4 16V6H9.8L13 1.5L16.2 6H14.6V16Z" fill="#a8da8c" stroke="#6a6a50" stroke-width="0.5"/><path d="M13 15.5H5V13.5L1 16L5 18.5V16.5H13Z" fill="#f0c020" stroke="#8a6a30" stroke-width="0.4"/><rect x="10.4" y="13.3" width="5.2" height="5.2" fill="#e03020" stroke="#7a5a40" stroke-width="0.4"/><text x="0.5" y="9" font-size="8.5" font-family="Liberation Sans" fill="#555">+X</text></svg>
<svg style="position:absolute;left:665.9px;top:78.8px;overflow:visible;" width="20" height="20" viewBox="0 0 20 20"><path d="M3.4 16V6H1.7999999999999998L5 1.5L8.2 6H6.6V16Z" fill="#a8da8c" stroke="#6a6a50" stroke-width="0.5"/><path d="M5 15.5H15V13.5L19 16L15 18.5V16.5H5Z" fill="#f0c020" stroke="#8a3a30" stroke-width="0.4"/><rect x="2.4" y="13.3" width="5.2" height="5.2" fill="#e03020" stroke="#7a5a40" stroke-width="0.4"/><text x="8.0" y="9" font-size="8.5" font-family="Liberation Sans" fill="#555">-X</text></svg>
<svg style="position:absolute;left:694.3px;top:78.8px;overflow:visible;" width="20" height="20" viewBox="0 0 20 20"><path d="M3.4 16V6H1.7999999999999998L5 1.5L8.2 6H6.6V16Z" fill="#a8da8c" stroke="#6a6a50" stroke-width="0.5"/><path d="M5 15.5H15V13.5L19 16L15 18.5V16.5H5Z" fill="#e03020" stroke="#8a3a30" stroke-width="0.4"/><rect x="2.4" y="13.3" width="5.2" height="5.2" fill="#f0c020" stroke="#7a5a40" stroke-width="0.4"/><text x="8.0" y="9" font-size="8.5" font-family="Liberation Sans" fill="#555">+Y</text></svg>
<svg style="position:absolute;left:722.3px;top:78.8px;overflow:visible;" width="20" height="20" viewBox="0 0 20 20"><path d="M11.4 16V6H9.8L13 1.5L16.2 6H14.6V16Z" fill="#a8da8c" stroke="#6a6a50" stroke-width="0.5"/><path d="M13 15.5H5V13.5L1 16L5 18.5V16.5H13Z" fill="#e03020" stroke="#8a6a30" stroke-width="0.4"/><rect x="10.4" y="13.3" width="5.2" height="5.2" fill="#f0c020" stroke="#7a5a40" stroke-width="0.4"/><text x="0.5" y="9" font-size="8.5" font-family="Liberation Sans" fill="#555">-Y</text></svg>
<svg style="position:absolute;left:750.2px;top:78.8px;overflow:visible;" width="20" height="20" viewBox="0 0 20 20"><path d="M11.4 16V6H9.8L13 1.5L16.2 6H14.6V16Z" fill="#f0c020" stroke="#6a6a50" stroke-width="0.5"/><path d="M13 15.5H5V13.5L1 16L5 18.5V16.5H13Z" fill="#e03020" stroke="#8a6a30" stroke-width="0.4"/><rect x="10.4" y="13.3" width="5.2" height="5.2" fill="#a8da8c" stroke="#7a5a40" stroke-width="0.4"/><text x="0.5" y="9" font-size="8.5" font-family="Liberation Sans" fill="#555">+Z</text></svg>
<svg style="position:absolute;left:778.6px;top:78.8px;overflow:visible;" width="20" height="20" viewBox="0 0 20 20"><path d="M3.4 16V6H1.7999999999999998L5 1.5L8.2 6H6.6V16Z" fill="#f0c020" stroke="#6a6a50" stroke-width="0.5"/><path d="M5 15.5H15V13.5L19 16L15 18.5V16.5H5Z" fill="#e03020" stroke="#8a3a30" stroke-width="0.4"/><rect x="2.4" y="13.3" width="5.2" height="5.2" fill="#a8da8c" stroke="#7a5a40" stroke-width="0.4"/><text x="8.0" y="9" font-size="8.5" font-family="Liberation Sans" fill="#555">-Z</text></svg>
<svg style="position:absolute;left:806.0px;top:78.8px;overflow:visible;" width="20" height="20" viewBox="0 0 20 20"><path d="M13.5 5A5.5 5.5 0 1 0 13 12" fill="none" stroke="#96cf78" stroke-width="2"/><path d="M11 4L16 2.5L15.5 8Z" fill="#96cf78"/><text x="8.5" y="19.5" font-size="7.5" font-family="Liberation Sans" fill="#666">+90</text></svg>
<svg style="position:absolute;left:835.5px;top:78.8px;overflow:visible;" width="20" height="20" viewBox="0 0 20 20"><path d="M6.5 5A5.5 5.5 0 1 1 7 12" fill="none" stroke="#96cf78" stroke-width="2"/><path d="M9 4L4 2.5L4.5 8Z" fill="#96cf78"/><text x="1" y="19.5" font-size="7.5" font-family="Liberation Sans" fill="#666">-90</text></svg>
<div style="position:absolute;left:866px;top:78px;width:1px;height:1.2px;background:#a8a8a8;"></div>
<div style="position:absolute;left:866px;top:82px;width:1px;height:1.2px;background:#a8a8a8;"></div>
<div style="position:absolute;left:866px;top:86px;width:1px;height:1.2px;background:#a8a8a8;"></div>
<div style="position:absolute;left:866px;top:90px;width:1px;height:1.2px;background:#a8a8a8;"></div>
<div style="position:absolute;left:866px;top:94px;width:1px;height:1.2px;background:#a8a8a8;"></div>
<div style="position:absolute;left:868.6px;top:74.8px;width:28px;height:27.6px;background:linear-gradient(#d2d2d2,#c8c8c8);"></div>
<svg style="position:absolute;left:872.8px;top:78.8px;overflow:visible;" width="20" height="20" viewBox="0 0 20 20"><path d="M6.5 14V4.5H5L7 1.5L9 4.5H7.5V14Z" fill="#f0c020"/><path d="M7 14H14V12.5L17 14.5L14 16.5V15H7Z" fill="#e85a30"/><path d="M7 14L3 17.5L2.5 16L1.5 19L4.5 18.3L3.5 17.8" fill="#5ac040" stroke="#5ac040" stroke-width="1.2"/><ellipse cx="14" cy="5" rx="3.6" ry="2.3" fill="#fff" stroke="#333" stroke-width="0.5"/><circle cx="14" cy="5" r="1.6" fill="#24306a"/></svg>
<svg style="position:absolute;left:900.8px;top:78.8px;overflow:visible;" width="20" height="20" viewBox="0 0 20 20"><path d="M15.5 5A7 7 0 1 0 17 10" fill="none" stroke="#96cf78" stroke-width="2.4" /><path d="M12 3L18 1.5L17 7.5Z" fill="#96cf78" stroke="#6d8a5e" stroke-width="0.4"/><path d="M15.5 5A7 7 0 1 0 17 10" fill="none" stroke="#6d8a5e" stroke-width="0.4" opacity="0.6"/><circle cx="10" cy="10" r="2" fill="#f0b800"/></svg>
<svg style="position:absolute;left:929.3px;top:78.8px;overflow:visible;" width="20" height="20" viewBox="0 0 20 20"><path d="M15.5 5A7 7 0 1 0 17 10" fill="none" stroke="#96cf78" stroke-width="2.4" /><path d="M12 3L18 1.5L17 7.5Z" fill="#96cf78" stroke="#6d8a5e" stroke-width="0.4"/><path d="M15.5 5A7 7 0 1 0 17 10" fill="none" stroke="#6d8a5e" stroke-width="0.4" opacity="0.6"/><path d="M10 6.5L11 9L13.5 10L11 11L10 13.5L9 11L6.5 10L9 9Z" fill="#f0b800"/></svg>
<svg style="position:absolute;left:957.0px;top:78.8px;overflow:visible;" width="20" height="20" viewBox="0 0 20 20"><path d="M15.5 5A7 7 0 1 0 17 10" fill="none" stroke="#96cf78" stroke-width="2.4" /><path d="M12 3L18 1.5L17 7.5Z" fill="#96cf78" stroke="#6d8a5e" stroke-width="0.4"/><path d="M15.5 5A7 7 0 1 0 17 10" fill="none" stroke="#6d8a5e" stroke-width="0.4" opacity="0.6"/><path d="M13.5 13.5L18 18M13 13L13.5 17L17 13.5Z" stroke="#111" stroke-width="1" fill="#111"/></svg>
<div style="position:absolute;left:987.4px;top:78px;width:1px;height:1.2px;background:#a8a8a8;"></div>
<div style="position:absolute;left:987.4px;top:82px;width:1px;height:1.2px;background:#a8a8a8;"></div>
<div style="position:absolute;left:987.4px;top:86px;width:1px;height:1.2px;background:#a8a8a8;"></div>
<div style="position:absolute;left:987.4px;top:90px;width:1px;height:1.2px;background:#a8a8a8;"></div>
<div style="position:absolute;left:987.4px;top:94px;width:1px;height:1.2px;background:#a8a8a8;"></div>
<div style="position:absolute;left:996.6px;top:84.5px;font-size:9px;line-height:11px;color:#3a3a3a;font-weight:normal;white-space:nowrap;">RefreshAllVTKItems</div>
<div style="position:absolute;left:1092.8px;top:84.5px;font-size:9px;line-height:11px;color:#3a3a3a;font-weight:normal;white-space:nowrap;">reload</div>
<svg style="position:absolute;left:49.75px;top:108.3px;overflow:visible;" width="20" height="20" viewBox="0 0 20 20"><rect x="4" y="1.5" width="12" height="17" rx="2" fill="#ececec" stroke="#8a8a8a" stroke-width="0.8"/><rect x="6" y="3.5" width="8" height="3" fill="#cfe4f8" stroke="#99a" stroke-width="0.4"/><circle cx="7" cy="9.5" r="0.9" fill="#4a4a30"/><circle cx="10" cy="9.5" r="0.9" fill="#4a4a30"/><circle cx="13" cy="9.5" r="0.9" fill="#4a4a30"/><circle cx="7" cy="12.5" r="0.9" fill="#4a4a30"/><circle cx="10" cy="12.5" r="0.9" fill="#4a4a30"/><circle cx="13" cy="12.5" r="0.9" fill="#4a4a30"/><circle cx="7" cy="15.5" r="0.9" fill="#4a4a30"/><circle cx="10" cy="15.5" r="0.9" fill="#4a4a30"/><circle cx="13" cy="15.5" r="0.9" fill="#4a4a30"/></svg>
<svg style="position:absolute;left:80.7px;top:108.3px;overflow:visible;" width="20" height="20" viewBox="0 0 20 20"><path d="M3 6C6 1 15 1 17.5 8C19.5 14 17 19 15 18.5Z" fill="#6cc040" stroke="#5a8a40" stroke-width="0.5"/><ellipse cx="9" cy="11" rx="7" ry="4.5" transform="rotate(35 9 11)" fill="#9ec8e8" stroke="#4a90c8" stroke-width="0.8"/><ellipse cx="9" cy="11" rx="4" ry="2.3" transform="rotate(35 9 11)" fill="none" stroke="#4a90c8" stroke-width="0.6"/></svg>
<svg style="position:absolute;left:111.6px;top:108.3px;overflow:visible;" width="20" height="20" viewBox="0 0 20 20"><path d="M2 5L6 2H12V14L8 17H2Z" fill="#6cc040" stroke="#5a8a40" stroke-width="0.6"/><path d="M5 5H12L11 15H6Z" fill="#a8da8c"/><path d="M2 5L6 2H18V14L14 18H2Z M2 5H14V18 M14 5L18 2" fill="none" stroke="#7a7a60" stroke-width="0.7"/></svg>
<svg style="position:absolute;left:142.4px;top:108.3px;overflow:visible;" width="20" height="20" viewBox="0 0 20 20"><path d="M2 5L6 2H18V14L14 18H2Z M2 5H14V18 M14 5L18 2" fill="none" stroke="#7a7a60" stroke-width="0.7"/><path d="M6 5L13 3.5V15L7 16.5Z" fill="#a8da8c" stroke="#6d8a5e" stroke-width="0.5"/></svg>
<svg style="position:absolute;left:173.3px;top:108.3px;overflow:visible;" width="20" height="20" viewBox="0 0 20 20"><path d="M2 5L6 2H18V14L14 18H2Z M2 5H14V18 M14 5L18 2" fill="none" stroke="#7a7a60" stroke-width="0.7"/><path d="M2.5 5L5 3H9V8L6.5 10H2.5Z" fill="#a8da8c" stroke="#6d8a5e" stroke-width="0.5"/><path d="M9 6L12 4H17V13L14 15.5V9H9Z" fill="#8ed06a" stroke="#6d8a5e" stroke-width="0.5"/></svg>
<svg style="position:absolute;left:204.0px;top:108.3px;overflow:visible;" width="20" height="20" viewBox="0 0 20 20"><path d="M2 5L6 2H18V14L14 18H2Z" fill="#d4e8f8" stroke="#7a8a90" stroke-width="0.7"/><path d="M2 5H14V18M14 5L18 2" fill="none" stroke="#7a8a90" stroke-width="0.6"/><path d="M6 7L8 5.5H14V12L12 13.5H6Z" fill="#6cc040" stroke="#4a7a30" stroke-width="0.5"/><rect x="6.5" y="7.5" width="5.5" height="6" fill="#8ed06a"/></svg>
<svg style="position:absolute;left:235.0px;top:108.3px;overflow:visible;" width="20" height="20" viewBox="0 0 20 20"><ellipse cx="10" cy="10" rx="8" ry="8" fill="#d4e8f8" stroke="#7a9aa0" stroke-width="0.6"/><ellipse cx="10" cy="10" rx="8" ry="3.5" fill="none" stroke="#7a9aa0" stroke-width="0.5"/><ellipse cx="10" cy="10" rx="3.5" ry="8" fill="none" stroke="#7a9aa0" stroke-width="0.5"/><circle cx="10" cy="2" r="1.5" fill="#8ed06a" stroke="#5a8a40" stroke-width="0.3"/><circle cx="10" cy="18" r="1.5" fill="#8ed06a" stroke="#5a8a40" stroke-width="0.3"/><circle cx="2" cy="10" r="1.5" fill="#8ed06a" stroke="#5a8a40" stroke-width="0.3"/><circle cx="18" cy="10" r="1.5" fill="#8ed06a" stroke="#5a8a40" stroke-width="0.3"/><circle cx="4.5" cy="5" r="1.5" fill="#8ed06a" stroke="#5a8a40" stroke-width="0.3"/><circle cx="15.5" cy="5" r="1.5" fill="#8ed06a" stroke="#5a8a40" stroke-width="0.3"/><circle cx="4.5" cy="15" r="1.5" fill="#8ed06a" stroke="#5a8a40" stroke-width="0.3"/><circle cx="15.5" cy="15" r="1.5" fill="#8ed06a" stroke="#5a8a40" stroke-width="0.3"/></svg>
<svg style="position:absolute;left:265.5px;top:108.3px;overflow:visible;" width="20" height="20" viewBox="0 0 20 20"><circle cx="8" cy="10" r="3.5" fill="#c8e4b8" stroke="#a8b8a0" stroke-width="0.5"/><path d="M2 4C6 2 10 6 18 4M2 7C5 6 14 8 18 7M2 13C5 14 14 12 18 13M2 16C6 18 10 14 18 16" fill="none" stroke="#c0c8b8" stroke-width="0.8"/></svg>
<svg style="position:absolute;left:297.0px;top:108.3px;overflow:visible;" width="20" height="20" viewBox="0 0 20 20"><path d="M2 11C6 11 11 9 14 4L18 7C15 13 10 16 2 16Z" fill="#c8dcc0" stroke="#aab8a0" stroke-width="0.5"/><path d="M12 16L18 10V16Z" fill="#e0ece0" stroke="#aab8a0" stroke-width="0.4"/></svg>
<svg style="position:absolute;left:328.0px;top:108.3px;overflow:visible;" width="20" height="20" viewBox="0 0 20 20"><circle cx="10" cy="10" r="7.5" fill="#fafafa" stroke="#666" stroke-width="0.8"/><circle cx="7" cy="6.5" r="1.8" fill="#dcecd8" stroke="#777" stroke-width="0.4"/><circle cx="12" cy="11.5" r="3" fill="#8ed06a" stroke="#5a8a40" stroke-width="0.4"/><circle cx="6.5" cy="12.5" r="1.4" fill="#8ed06a"/></svg>
<svg style="position:absolute;left:358.0px;top:108.3px;overflow:visible;" width="20" height="20" viewBox="0 0 20 20"><g opacity="0.45"><circle cx="11" cy="11" r="7" fill="none" stroke="#666" stroke-width="0.7"/><circle cx="5" cy="3.5" r="2" fill="#dcecd8" stroke="#666" stroke-width="0.4"/><circle cx="14" cy="12" r="2.6" fill="#8ed06a"/><circle cx="9" cy="14.5" r="1.3" fill="#8ed06a"/></g></svg>
<div style="position:absolute;left:389px;top:107px;width:1px;height:1.2px;background:#a8a8a8;"></div>
<div style="position:absolute;left:389px;top:111px;width:1px;height:1.2px;background:#a8a8a8;"></div>
<div style="position:absolute;left:389px;top:115px;width:1px;height:1.2px;background:#a8a8a8;"></div>
<div style="position:absolute;left:389px;top:119px;width:1px;height:1.2px;background:#a8a8a8;"></div>
<div style="position:absolute;left:389px;top:123px;width:1px;height:1.2px;background:#a8a8a8;"></div>
<svg style="position:absolute;left:395.5px;top:108.3px;overflow:visible;" width="20" height="20" viewBox="0 0 20 20"><path d="M5 4V16H16" fill="none" stroke="#8a8a7a" stroke-width="0.8"/><path d="M10.5 5V15M9 7H12V12H9Z" fill="none" stroke="#2a70d0" stroke-width="0.8"/></svg>
<svg style="position:absolute;left:425.2px;top:108.3px;overflow:visible;" width="20" height="20" viewBox="0 0 20 20"><path d="M2 2H15V11H11V15H2Z" fill="#d4e8f8" stroke="#6a8ab0" stroke-width="0.8"/><rect x="12" y="12" width="6" height="6" fill="#a8da8c" stroke="#6d8a5e" stroke-width="0.5" stroke-dasharray="1 0.8"/></svg>
<svg style="position:absolute;left:457.7px;top:108.3px;overflow:visible;" width="20" height="20" viewBox="0 0 20 20"><path d="M2.5 2V17.5H18" fill="none" stroke="#888" stroke-width="0.7"/><rect x="4" y="12" width="3" height="5" fill="#1d6fd6"/><rect x="7" y="7" width="3" height="10" fill="#30b0a0"/><rect x="10" y="2" width="3" height="15" fill="#50c040"/><rect x="13" y="8" width="3" height="9" fill="#c8d020"/><rect x="16" y="12" width="2.5" height="5" fill="#f0c020"/></svg>
<svg style="position:absolute;left:488.8px;top:108.3px;overflow:visible;" width="20" height="20" viewBox="0 0 20 20"><circle cx="5.5" cy="5" r="3.5" fill="#f4f4f4" stroke="#777" stroke-width="0.7"/><path d="M5.5 3V5L7 6.3" fill="none" stroke="#2a70d0" stroke-width="0.7"/><circle cx="14.5" cy="5" r="3.5" fill="#f0b030" stroke="#8a6a30" stroke-width="0.7"/><rect x="13" y="3.5" width="3" height="3" fill="#c88a20"/><path d="M3 17.5H18" stroke="#666" stroke-width="0.7"/><path d="M3 14L4.5 12L6 15.5L7.5 11.5L9 15L10.5 12L12 15.5L13.5 12L15 15L16.5 12.5L18 14.5" fill="none" stroke="#1d5fc6" stroke-width="0.8"/></svg>
<svg style="position:absolute;left:519.7px;top:108.3px;overflow:visible;" width="20" height="20" viewBox="0 0 20 20"><path d="M3 2H15L17.5 5L16 18H5Z" fill="#8ed06a" stroke="#5a8a40" stroke-width="0.6"/><path d="M3 16L17 3" stroke="#2a5aa8" stroke-width="1.3"/><path d="M5 13L7 14M8 10L10 11M11 7L13 8" stroke="#3a6ab8" stroke-width="0.8"/></svg>
<svg style="position:absolute;left:550.2px;top:108.3px;overflow:visible;" width="20" height="20" viewBox="0 0 20 20"><circle cx="5.5" cy="5" r="3.5" fill="#f4f4f4" stroke="#777" stroke-width="0.7"/><path d="M5.5 3V5L7 6.3" fill="none" stroke="#2a70d0" stroke-width="0.7"/><rect x="11" y="1.5" width="7" height="7" fill="none" stroke="#999" stroke-width="0.6" stroke-dasharray="1 0.8"/><path d="M14.5 3L16.5 7H12.5Z" fill="#a8da8c"/><path d="M3 17.5H18" stroke="#666" stroke-width="0.7"/><path d="M3 14L4.5 12L6 15.5L7.5 11.5L9 15L10.5 12L12 15.5L13.5 12L15 15L16.5 12.5L18 14.5" fill="none" stroke="#1d5fc6" stroke-width="0.8"/></svg>
<svg style="position:absolute;left:581.6px;top:108.3px;overflow:visible;" width="20" height="20" viewBox="0 0 20 20"><path d="M2 5L10 1.5L18 5V15L10 18.5L2 15Z" fill="#d8eaf8" stroke="#b8ccd8" stroke-width="0.6"/><path d="M10 4V16M5 7L15 13M15 7L5 13" stroke="#8a9aa8" stroke-width="0.9"/></svg>
<svg style="position:absolute;left:613.0px;top:108.3px;overflow:visible;" width="20" height="20" viewBox="0 0 20 20"><text x="0.5" y="15.5" font-size="16" font-family="Liberation Sans" fill="#555">{</text><text x="14" y="15.5" font-size="16" font-family="Liberation Sans" fill="#555">}</text><circle cx="7" cy="14" r="1" fill="#1d8fd6"/><circle cx="10" cy="14" r="1" fill="#1d8fd6"/><circle cx="13" cy="14" r="1" fill="#1d8fd6"/></svg>
<div style="position:absolute;left:642.4px;top:107px;width:1px;height:1.2px;background:#a8a8a8;"></div>
<div style="position:absolute;left:642.4px;top:111px;width:1px;height:1.2px;background:#a8a8a8;"></div>
<div style="position:absolute;left:642.4px;top:115px;width:1px;height:1.2px;background:#a8a8a8;"></div>
<div style="position:absolute;left:642.4px;top:119px;width:1px;height:1.2px;background:#a8a8a8;"></div>
<div style="position:absolute;left:642.4px;top:123px;width:1px;height:1.2px;background:#a8a8a8;"></div>
<svg style="position:absolute;left:649.7px;top:108.3px;overflow:visible;" width="20" height="20" viewBox="0 0 20 20"><path d="M1.5 14.5L14.5 1.5L18.5 5.5L5.5 18.5Z" fill="#f0c020" stroke="#8a6a10" stroke-width="0.6"/><path d="M4 12L6 14M6 10L7.3 11.3M8 8L10 10M10 6L11.3 7.3M12 4L14 6" stroke="#8a6a10" stroke-width="0.6"/></svg>
<svg style="position:absolute;left:414.3px;top:152.0px;overflow:visible;" width="14" height="14" viewBox="0 0 14 14"><g opacity="1"><rect x="1.5" y="2.5" width="11" height="8" rx="1.5" fill="#e0e0e0" stroke="#8a8a8a" stroke-width="0.7"/><circle cx="7" cy="6.5" r="2.6" fill="#cfe8ff" stroke="#777" stroke-width="0.8"/><path d="M4 13C2 12 2 10 4 9.5" fill="none" stroke="#e02020" stroke-width="1.3"/><path d="M1.5 9L5.5 8.5L4 11.5Z" fill="#e02020"/><path d="M4 13H8" stroke="#e02020" stroke-width="1.3"/></g></svg>
<svg style="position:absolute;left:433.6px;top:152.0px;overflow:visible;" width="14" height="14" viewBox="0 0 14 14"><g opacity="0.5"><rect x="1.5" y="2.5" width="11" height="8" rx="1.5" fill="#e0e0e0" stroke="#8a8a8a" stroke-width="0.7"/><circle cx="7" cy="6.5" r="2.6" fill="#cfe8ff" stroke="#777" stroke-width="0.8"/><path d="M4 13C2 12 2 10 4 9.5M4 13H8" fill="none" stroke="#9ac88a" stroke-width="1.3"/></g></svg>
<div style="position:absolute;left:451.4px;top:151px;width:1px;height:1.2px;background:#a8a8a8;"></div>
<div style="position:absolute;left:451.4px;top:155px;width:1px;height:1.2px;background:#a8a8a8;"></div>
<div style="position:absolute;left:451.4px;top:159px;width:1px;height:1.2px;background:#a8a8a8;"></div>
<div style="position:absolute;left:451.4px;top:163px;width:1px;height:1.2px;background:#a8a8a8;"></div>
<svg style="position:absolute;left:456.0px;top:152.0px;overflow:visible;" width="14" height="14" viewBox="0 0 14 14"><g opacity="1"><rect x="1.5" y="2.5" width="11" height="8" rx="1.5" fill="#e0e0e0" stroke="#8a8a8a" stroke-width="0.7"/><circle cx="7" cy="6.5" r="2.6" fill="#cfe8ff" stroke="#777" stroke-width="0.8"/><path d="M0.5 3V0.5H3M11 0.5H13.5V3M0.5 11V13.5H3M11 13.5H13.5V11" fill="none" stroke="#aaa" stroke-width="0.6"/></g></svg>
<div style="position:absolute;left:474.8px;top:151px;width:1px;height:1.2px;background:#a8a8a8;"></div>
<div style="position:absolute;left:474.8px;top:155px;width:1px;height:1.2px;background:#a8a8a8;"></div>
<div style="position:absolute;left:474.8px;top:159px;width:1px;height:1.2px;background:#a8a8a8;"></div>
<div style="position:absolute;left:474.8px;top:163px;width:1px;height:1.2px;background:#a8a8a8;"></div>
<svg style="position:absolute;left:478.7px;top:152.0px;overflow:visible;" width="14" height="14" viewBox="0 0 14 14"><text x="1.5" y="10.5" font-size="9" font-family="Liberation Sans" fill="#666">3D</text></svg>
<svg style="position:absolute;left:497.6px;top:152.0px;overflow:visible;" width="14" height="14" viewBox="0 0 14 14"><g opacity="1"><rect x="1.5" y="2.5" width="11" height="8" rx="1.5" fill="#e0e0e0" stroke="#8a8a8a" stroke-width="0.7"/><circle cx="7" cy="6.5" r="2.6" fill="#cfe8ff" stroke="#777" stroke-width="0.8"/><path d="M9 9L13 13" stroke="#d8a820" stroke-width="1.8"/></g></svg>
<div style="position:absolute;left:515.8px;top:151px;width:1px;height:1.2px;background:#a8a8a8;"></div>
<div style="position:absolute;left:515.8px;top:155px;width:1px;height:1.2px;background:#a8a8a8;"></div>
<div style="position:absolute;left:515.8px;top:159px;width:1px;height:1.2px;background:#a8a8a8;"></div>
<div style="position:absolute;left:515.8px;top:163px;width:1px;height:1.2px;background:#a8a8a8;"></div>
<svg style="position:absolute;left:520.6px;top:152.0px;overflow:visible;" width="14" height="14" viewBox="0 0 14 14"><rect x="1" y="1" width="12" height="12" fill="none" stroke="#aaa" stroke-width="0.7" stroke-dasharray="1 1"/><path d="M7 3.5L10.5 7L7 10.5L3.5 7Z" fill="#8ed06a" stroke="#6d8a5e" stroke-width="0.4"/></svg>
<svg style="position:absolute;left:539.3px;top:152.0px;overflow:visible;" width="14" height="14" viewBox="0 0 14 14"><rect x="1" y="1" width="12" height="12" fill="none" stroke="#aaa" stroke-width="0.7" stroke-dasharray="1 1"/><rect x="3" y="6" width="8" height="2.2" fill="#e02a2a"/></svg>
<svg style="position:absolute;left:558.0px;top:152.0px;overflow:visible;" width="14" height="14" viewBox="0 0 14 14"><rect x="1" y="1" width="12" height="12" fill="none" stroke="#aaa" stroke-width="0.7" stroke-dasharray="1 1"/><path d="M7 2L9 4.5L7 7L5 4.5Z" fill="#8ed06a"/><rect x="4" y="8" width="5" height="1.8" fill="#e02a2a"/><path d="M10 10L13 13" stroke="#222" stroke-width="1"/></svg>
<div style="position:absolute;left:576.3px;top:151px;width:1px;height:1.2px;background:#a8a8a8;"></div>
<div style="position:absolute;left:576.3px;top:155px;width:1px;height:1.2px;background:#a8a8a8;"></div>
<div style="position:absolute;left:576.3px;top:159px;width:1px;height:1.2px;background:#a8a8a8;"></div>
<div style="position:absolute;left:576.3px;top:163px;width:1px;height:1.2px;background:#a8a8a8;"></div>
<svg style="position:absolute;left:580.9px;top:152.0px;overflow:visible;" width="14" height="14" viewBox="0 0 14 14"><rect x="1" y="1" width="12" height="12" fill="none" stroke="#aaa" stroke-width="0.7" stroke-dasharray="1 1"/><path d="M7 3L11 10.5H3Z" fill="#8ed06a" stroke="#6d8a5e" stroke-width="0.4"/><path d="M10 10L13 13" stroke="#222" stroke-width="1"/></svg>
<svg style="position:absolute;left:600.2px;top:152.0px;overflow:visible;" width="14" height="14" viewBox="0 0 14 14"><rect x="1" y="1" width="12" height="12" fill="none" stroke="#aaa" stroke-width="0.7" stroke-dasharray="1 1"/><circle cx="8" cy="4" r="0.9" fill="#c04020"/><circle cx="4" cy="10" r="0.9" fill="#c04020"/><path d="M10 10L13 13" stroke="#222" stroke-width="1"/></svg>
<svg style="position:absolute;left:619.5px;top:152.0px;overflow:visible;" width="14" height="14" viewBox="0 0 14 14"><path d="M2 7L7 3L13 4.5V8.5L8 12L2 10Z" fill="#8ed06a" stroke="#5a8a40" stroke-width="0.5"/><path d="M2 7L8 8.5L13 4.5M8 8.5V12" fill="none" stroke="#5a8a40" stroke-width="0.4"/><path d="M9 11L12 14" stroke="#333" stroke-width="0.8"/></svg>
<svg style="position:absolute;left:638.0px;top:152.0px;overflow:visible;" width="14" height="14" viewBox="0 0 14 14"><rect x="1" y="1" width="12" height="12" fill="none" stroke="#aaa" stroke-width="0.7" stroke-dasharray="1 1"/><circle cx="5" cy="4" r="0.9" fill="#c04020"/><circle cx="9" cy="6" r="0.9" fill="#c04020"/><circle cx="5" cy="9" r="0.9" fill="#c04020"/><circle cx="9" cy="10" r="0.9" fill="#c04020"/><circle cx="7" cy="7" r="0.9" fill="#c04020"/></svg>
<svg style="position:absolute;left:656.4px;top:152.0px;overflow:visible;" width="14" height="14" viewBox="0 0 14 14"><rect x="1" y="1" width="12" height="12" fill="none" stroke="#bbb" stroke-width="0.6" stroke-dasharray="1 1"/><path d="M7 4.5L10 10H4Z" fill="#a8da8c" opacity="0.8"/><path d="M10 10L13 13" stroke="#555" stroke-width="0.8"/></svg>
<svg style="position:absolute;left:674.6px;top:152.0px;overflow:visible;" width="14" height="14" viewBox="0 0 14 14"><rect x="1" y="1" width="12" height="12" fill="none" stroke="#aaa" stroke-width="0.7" stroke-dasharray="1 1"/><circle cx="5" cy="4" r="0.9" fill="#c04020"/><circle cx="9" cy="6" r="0.9" fill="#c04020"/><circle cx="5" cy="9" r="0.9" fill="#c04020"/><circle cx="9" cy="10" r="0.9" fill="#c04020"/><circle cx="7" cy="7" r="0.9" fill="#c04020"/></svg>
<svg style="position:absolute;left:694.0px;top:152.0px;overflow:visible;" width="14" height="14" viewBox="0 0 14 14"><rect x="1" y="1" width="12" height="12" fill="none" stroke="#aaa" stroke-width="0.7" stroke-dasharray="1 1"/><circle cx="4.5" cy="4.5" r="1.3" fill="#1d8fd6"/><circle cx="4.5" cy="10" r="1.3" fill="#1d8fd6"/><circle cx="8.5" cy="7.5" r="2.3" fill="#a8da8c" stroke="#555" stroke-width="0.6"/><path d="M10 9.5L13 12.5" stroke="#333" stroke-width="1"/></svg>
<svg style="position:absolute;left:713.0px;top:152.0px;overflow:visible;" width="14" height="14" viewBox="0 0 14 14"><path d="M2 8L7 2L12 5L9 12L3 12Z" fill="#f0c860" stroke="#c0a040" stroke-width="0.4"/><path d="M9 9L13 13" stroke="#666" stroke-width="1"/></svg>
<svg style="position:absolute;left:733.5px;top:152.0px;overflow:visible;" width="14" height="14" viewBox="0 0 14 14"><circle cx="6" cy="6" r="1.6" fill="#f0c040"/><path d="M8 8L11.5 11.5" stroke="#555" stroke-width="0.9"/></svg>
<svg style="position:absolute;left:750.8px;top:152.0px;overflow:visible;" width="14" height="14" viewBox="0 0 14 14"><path d="M6 2.5L10 9.5H2Z" fill="#a8da8c" stroke="#5a8a40" stroke-width="0.5"/><path d="M9 9L12.5 12.5" stroke="#333" stroke-width="1"/></svg>
<svg style="position:absolute;left:769.5px;top:152.0px;overflow:visible;" width="14" height="14" viewBox="0 0 14 14"><circle cx="6.5" cy="3" r="0.9" fill="#c02020"/><circle cx="2.5" cy="10" r="0.9" fill="#c02020"/><path d="M9 9L12.5 12.5" stroke="#333" stroke-width="1"/></svg>
<svg style="position:absolute;left:788.4px;top:152.0px;overflow:visible;" width="14" height="14" viewBox="0 0 14 14"><path d="M4.5 6.5L8 12.5H1Z" fill="#a8da8c" stroke="#5a8a40" stroke-width="0.5"/><text x="7" y="9.5" font-size="10" font-family="Liberation Sans" fill="#444">?</text></svg>
<svg style="position:absolute;left:806.7px;top:152.0px;overflow:visible;" width="14" height="14" viewBox="0 0 14 14"><circle cx="4" cy="11" r="1.7" fill="#e02020"/><text x="7" y="9.5" font-size="10" font-family="Liberation Sans" fill="#444">?</text></svg>
<svg style="position:absolute;left:826.0px;top:152.0px;overflow:visible;" width="14" height="14" viewBox="0 0 14 14"><path d="M7 2V12M2 7H12" stroke="#4a9ad8" stroke-width="2.6"/></svg>
<svg style="position:absolute;left:844.3px;top:152.0px;overflow:visible;" width="14" height="14" viewBox="0 0 14 14"><path d="M1.5 7H12.5" stroke="#4a9ad8" stroke-width="2.6"/></svg>
<svg style="position:absolute;left:863.5px;top:152.0px;overflow:visible;" width="14" height="14" viewBox="0 0 14 14"><path d="M3.5 3.5H10.5L10 13H4Z" fill="#b8b8b8" stroke="#999" stroke-width="0.5"/><rect x="3" y="2" width="8" height="1.6" fill="#c8c8c8" stroke="#999" stroke-width="0.4"/></svg>
<svg style="position:absolute;left:77.0px;top:485.3px;overflow:visible;" width="13" height="13" viewBox="0 0 20 20"><defs><linearGradient id="gcc1" x1="0" y1="1" x2="1" y2="0"><stop offset="0" stop-color="#4030a0"/><stop offset="0.35" stop-color="#2aa0d0"/><stop offset="0.65" stop-color="#e8d830"/><stop offset="1" stop-color="#f08020"/></linearGradient></defs><rect x="1.5" y="8" width="16.5" height="9" fill="url(#gcc1)" stroke="#8a7a60" stroke-width="0.5"/><circle cx="6" cy="6" r="4.8" fill="#a8da8c" stroke="#6d8a5e" stroke-width="0.7"/><path d="M1.5 12.5H18M8 8V17M13 8V17" stroke="#7a6a40" stroke-width="0.5" opacity="0.7"/></svg>
<svg style="position:absolute;left:156.0px;top:485.3px;overflow:visible;" width="13" height="13" viewBox="0 0 20 20"><defs><linearGradient id="gcc2" x1="0" y1="1" x2="1" y2="0"><stop offset="0" stop-color="#4030a0"/><stop offset="0.35" stop-color="#2aa0d0"/><stop offset="0.65" stop-color="#e8d830"/><stop offset="1" stop-color="#f08020"/></linearGradient></defs><rect x="1.5" y="8" width="16.5" height="9" fill="url(#gcc2)" stroke="#8a7a60" stroke-width="0.5"/><path d="M3 11C1 9 3 7 5 8.5L7 10.5C8.5 12.5 6.5 14.5 4.5 13Z" fill="none" stroke="#111" stroke-width="1.4"/><path d="M7.5 6C6.5 3.5 9 1.5 11 3.5C12.5 5.5 11 7 9.5 8" fill="none" stroke="#111" stroke-width="1.4"/><path d="M1.5 4L3 5M4 2L4.5 3.5" stroke="#333" stroke-width="0.6"/></svg>
<svg style="position:absolute;left:192.2px;top:485.3px;overflow:visible;" width="13" height="13" viewBox="0 0 20 20"><g opacity="1"><path d="M1 7L5.5 3V5.5H14.5V3L19 7L14.5 11V8.5H5.5V11Z" fill="#a8da8c" stroke="#7a9a6a" stroke-width="0.5"/><path d="M1 14.5H19M1.5 12V17M6 13V16M10 13V16M14 13V16M18.5 12V17" stroke="#8a8a7a" stroke-width="0.7"/></g></svg>
<svg style="position:absolute;left:228.8px;top:485.3px;overflow:visible;" width="13" height="13" viewBox="0 0 20 20"><g opacity="1"><path d="M1 7L5.5 3V5.5H14.5V3L19 7L14.5 11V8.5H5.5V11Z" fill="#a8da8c" stroke="#7a9a6a" stroke-width="0.5"/><path d="M1 14.5H19M1.5 12V17M6 13V16M10 13V16M14 13V16M18.5 12V17" stroke="#8a8a7a" stroke-width="0.7"/><text x="12.5" y="17.5" font-size="7" font-weight="bold" font-family="Liberation Sans" fill="#111">c</text></g></svg>
<svg style="position:absolute;left:265.3px;top:485.3px;overflow:visible;" width="13" height="13" viewBox="0 0 20 20"><g opacity="1"><path d="M1 7L5.5 3V5.5H14.5V3L19 7L14.5 11V8.5H5.5V11Z" fill="#a8da8c" stroke="#7a9a6a" stroke-width="0.5"/><path d="M1 14.5H19M1.5 12V17M6 13V16M10 13V16M14 13V16M18.5 12V17" stroke="#8a8a7a" stroke-width="0.7"/><text x="13" y="17.5" font-size="7" font-weight="bold" font-family="Liberation Sans" fill="#666">t</text></g></svg>
<svg style="position:absolute;left:301.2px;top:485.3px;overflow:visible;" width="13" height="13" viewBox="0 0 20 20"><path d="M2 5H7L8 6.5H18V17H2Z" fill="#f2c870" stroke="#b09050" stroke-width="0.6"/><path d="M3 8H19L18 17H2Z" fill="#f6dc88"/><path d="M11 18L6.5 13.5C5 12 6.5 9.5 8.7 10.5L11 12L13.3 10.5C15.5 9.5 17 12 15.5 13.5Z" fill="#e02030"/></svg>
<svg style="position:absolute;left:337.5px;top:485.3px;overflow:visible;" width="13" height="13" viewBox="0 0 20 20"><defs><linearGradient id="gcb2" x1="0" y1="0" x2="0" y2="1"><stop offset="0" stop-color="#f0a020"/><stop offset="0.3" stop-color="#e8d830"/><stop offset="0.55" stop-color="#40c0b0"/><stop offset="0.8" stop-color="#2a70d0"/><stop offset="1" stop-color="#6a3a9a"/></linearGradient></defs><rect x="6.5" y="2" width="7" height="16" fill="url(#gcb2)" stroke="#8a7a70" stroke-width="0.6"/></svg>
<svg style="position:absolute;left:374.2px;top:485.3px;overflow:visible;" width="13" height="13" viewBox="0 0 20 20"><defs><linearGradient id="gcb3" x1="0" y1="0" x2="0" y2="1"><stop offset="0" stop-color="#f08020"/><stop offset="0.4" stop-color="#e0d030"/><stop offset="0.7" stop-color="#30a0d0"/><stop offset="1" stop-color="#5a30a0"/></linearGradient></defs><rect x="5" y="1.5" width="8" height="15" fill="url(#gcb3)" stroke="#8a7a70" stroke-width="0.5"/><circle cx="13" cy="14" r="4" fill="#111"/><path d="M11 14A2 2 0 0 1 15 13.5" stroke="#fff" stroke-width="1" fill="none"/></svg>
</div></body></html>
